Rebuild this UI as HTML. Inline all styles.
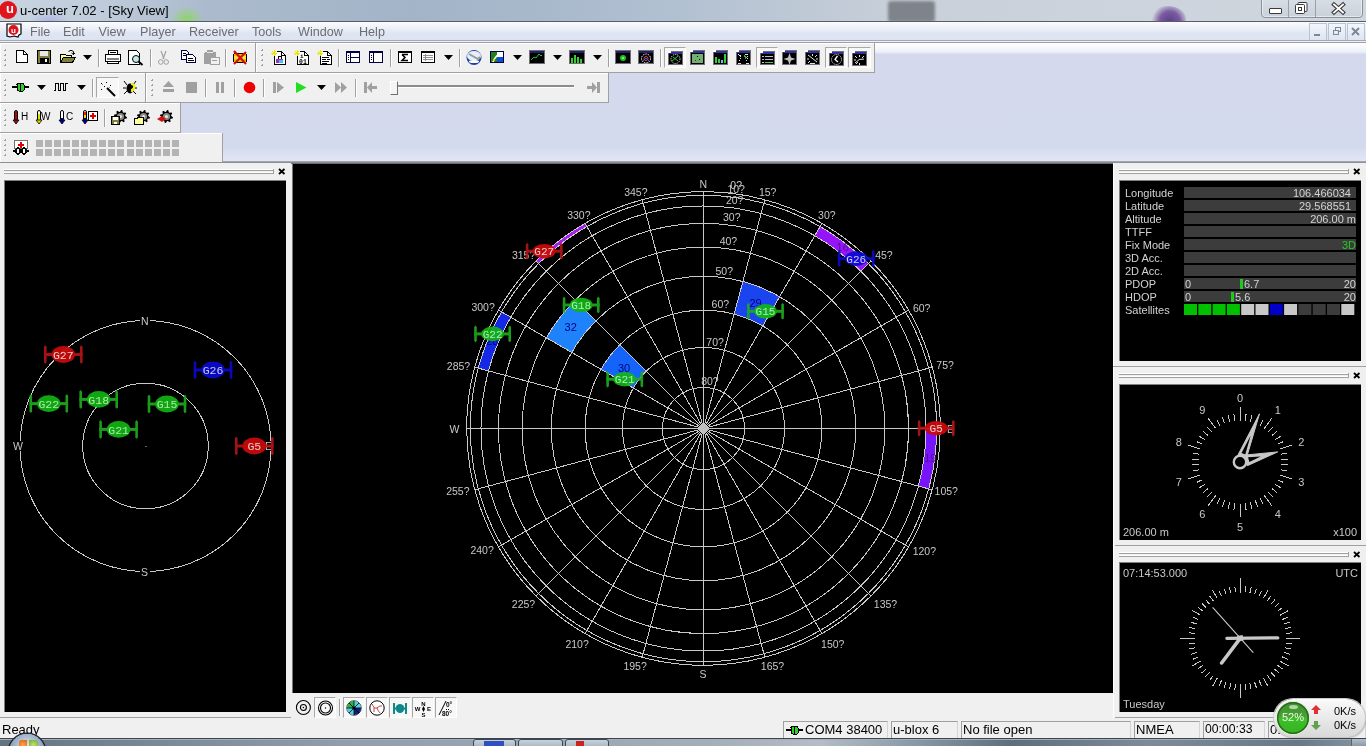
<!DOCTYPE html><html><head><meta charset="utf-8"><style>
html,body{margin:0;padding:0;width:1366px;height:746px;overflow:hidden;position:relative;font-family:"Liberation Sans",sans-serif;background:#d6ddef;}
.a{position:absolute;}
.tb{position:absolute;background:#f0f0f0;border-bottom:1px solid #a0a0a0;border-right:1px solid #a0a0a0;box-shadow:inset 1px 1px 0 #fff;}
.grip{position:absolute;width:2px;height:18px;background-image:radial-gradient(circle,#a8a8a8 0.9px,transparent 1px);background-size:2px 4px;}
.sep{position:absolute;width:1px;height:20px;background:#a0a0a0;box-shadow:1px 0 0 #fff;}
.pressed{position:absolute;border:1px solid #c8c8c8;border-right-color:#fff;border-bottom-color:#fff;background:#f6f6f6;}
svg{position:absolute;overflow:visible;}
.txt{position:absolute;white-space:nowrap;}
</style></head><body><div style="position:absolute;left:0;top:0;width:1366px;height:746px;will-change:transform">
<div class="a" style="left:0;top:0;width:1366px;height:21px;background:linear-gradient(90deg,#c9d4e0 0%,#bfccdb 7%,#abbbcd 15%,#a4b4c8 30%,#a9b9cc 40%,#b2c1d2 50%,#c0cad6 60%,#c9d0d9 67%,#cdd3dc 80%,#d0d6de 100%);overflow:hidden">
<div class="a" style="left:170px;top:6px;width:34px;height:26px;border-radius:50%;background:radial-gradient(#8fd36a,rgba(143,211,106,0) 70%)"></div>
<div class="a" style="left:30px;top:12px;width:40px;height:20px;border-radius:50%;background:radial-gradient(#a9b3e6,rgba(169,179,230,0) 70%)"></div>
<div class="a" style="left:888px;top:1px;width:47px;height:21px;background:#7f848a;border-radius:3px;filter:blur(1.5px)"></div>
<div class="a" style="left:1150px;top:6px;width:36px;height:26px;border-radius:50%;background:radial-gradient(circle at 55% 60%,#5e3f86 0,#7a5aa0 40%,rgba(150,130,180,0) 72%)"></div>
</div>
<div class="a" style="left:-1px;top:1px;width:18px;height:18px;border-radius:50%;background:#e0141c"></div>
<div class="txt" style="left:6px;top:1px;font-size:13px;color:#fff;font-weight:bold">u</div>
<div class="txt" style="left:20px;top:3px;font-size:13px;color:#000">u-center 7.02 - [Sky View]</div>
<div class="a" style="left:1261px;top:-2px;width:100px;height:18px;border:1px solid #8a919a;border-radius:0 0 4px 4px;background:linear-gradient(#d8dee6,#c9d1da);box-shadow:inset 0 0 0 1px rgba(255,255,255,0.5)"></div>
<div class="a" style="left:1288px;top:0;width:1px;height:17px;background:#9aa1a9"></div>
<div class="a" style="left:1315px;top:0;width:1px;height:17px;background:#9aa1a9"></div>
<div class="a" style="left:1269px;top:8px;width:11px;height:4px;border:1px solid #3a3a3a;border-radius:1px;background:#fff"></div>
<svg style="left:1294px;top:1px" width="16" height="14"><rect x="4" y="1.5" width="9" height="9" rx="1" fill="#fff" stroke="#3a3a3a"/><rect x="1.5" y="3.5" width="9" height="9" rx="1" fill="#fff" stroke="#3a3a3a"/><rect x="4.5" y="6.5" width="3" height="3" fill="none" stroke="#3a3a3a"/></svg>
<svg style="left:1331px;top:2px" width="16" height="13"><path d="M3 2.5 L12 10.5 M12 2.5 L3 10.5" stroke="#3a3a3a" stroke-width="4" stroke-linecap="square"/><path d="M3 2.5 L12 10.5 M12 2.5 L3 10.5" stroke="#fff" stroke-width="1.8" stroke-linecap="square"/></svg>
<div class="a" style="left:0;top:21px;width:1366px;height:1px;background:#565d66"></div>
<div class="a" style="left:0;top:22px;width:1366px;height:19px;background:linear-gradient(#fbfcfe 0%,#eef1f8 30%,#dfe5f3 60%,#dde3f2 100%)"></div>
<div class="a" style="left:0;top:40px;width:1366px;height:1px;background:#b9bfcc"></div>
<div class="a" style="left:0;top:41px;width:1366px;height:1px;background:#fff"></div>
<svg style="left:6px;top:23px" width="18" height="16"><path d="M1 1 H15 V11 L13 12 L12 14 L8 13 L4 14 L1 13 Z" fill="#fff" stroke="#000" stroke-width="1.2"/><circle cx="7.5" cy="7" r="5" fill="#d9141c"/><text x="5" y="10" font-size="8" fill="#fff" font-family="Liberation Sans" font-weight="bold">u</text></svg>
<div class="txt" style="left:30px;top:24.5px;font-size:12.6px;color:#6d6d6d">File</div>
<div class="txt" style="left:63px;top:24.5px;font-size:12.6px;color:#6d6d6d">Edit</div>
<div class="txt" style="left:98.5px;top:24.5px;font-size:12.6px;color:#6d6d6d">View</div>
<div class="txt" style="left:140px;top:24.5px;font-size:12.6px;color:#6d6d6d">Player</div>
<div class="txt" style="left:189px;top:24.5px;font-size:12.6px;color:#6d6d6d">Receiver</div>
<div class="txt" style="left:252px;top:24.5px;font-size:12.6px;color:#6d6d6d">Tools</div>
<div class="txt" style="left:298px;top:24.5px;font-size:12.6px;color:#6d6d6d">Window</div>
<div class="txt" style="left:359px;top:24.5px;font-size:12.6px;color:#6d6d6d">Help</div>
<div class="a" style="left:1309px;top:23px;width:16px;height:16px;border:1px solid #b8c4d4;background:linear-gradient(#f4f6fb,#dde4f2)"></div>
<div class="a" style="left:1328px;top:23px;width:16px;height:16px;border:1px solid #b8c4d4;background:linear-gradient(#f4f6fb,#dde4f2)"></div>
<div class="a" style="left:1347px;top:23px;width:16px;height:16px;border:1px solid #b8c4d4;background:linear-gradient(#f4f6fb,#dde4f2)"></div>
<div class="a" style="left:1314px;top:34px;width:6px;height:2px;background:#7c8797"></div>
<svg style="left:1332px;top:26px" width="10" height="10"><rect x="3.5" y="1.5" width="5" height="4" fill="none" stroke="#7c8797"/><rect x="1.5" y="4.5" width="5" height="4" fill="#e6ebf5" stroke="#7c8797"/></svg>
<svg style="left:1351px;top:27px" width="10" height="10"><path d="M1 1 L8 8 M8 1 L1 8" stroke="#7c8797" stroke-width="2"/></svg>
<div class="a" style="left:0;top:43px;width:1366px;height:119px;background:linear-gradient(#ffffff 0px,#f0f2f9 8px,#e6e9f5 10px,#d4d9ed 11px,#d4daee 104px,#e2e6f4 118px)"></div>
<div class="a" style="left:0;top:40px;width:1366px;height:1px;background:#a5a9b2"></div>
<div class="a" style="left:0;top:41px;width:1366px;height:1px;background:#eef0f6"></div>
<div class="a" style="left:0;top:42px;width:1366px;height:1px;background:#9c9fa6"></div>
<div class="a" style="left:0;top:161px;width:1366px;height:1px;background:#a4a6ae"></div>
<div class="a" style="left:0px;top:43px;width:255px;height:29px;background:#f0f0f0;box-shadow:inset 1px 1px 0 #fff"></div>
<div class="a" style="left:0px;top:72px;width:256px;height:1px;background:#a0a0a0"></div>
<div class="a" style="left:255px;top:43px;width:1px;height:29px;background:#a0a0a0"></div>
<div class="a" style="left:256px;top:43px;width:618px;height:29px;background:#f0f0f0;box-shadow:inset 1px 1px 0 #fff"></div>
<div class="a" style="left:256px;top:72px;width:619px;height:1px;background:#a0a0a0"></div>
<div class="a" style="left:874px;top:43px;width:1px;height:29px;background:#a0a0a0"></div>
<div class="a" style="left:4px;top:49px;width:2px;height:2px;background:linear-gradient(135deg,#f8f8f8 0,#f8f8f8 30%,#a0a0a0 31%)"></div>
<div class="a" style="left:4px;top:54px;width:2px;height:2px;background:linear-gradient(135deg,#f8f8f8 0,#f8f8f8 30%,#a0a0a0 31%)"></div>
<div class="a" style="left:4px;top:59px;width:2px;height:2px;background:linear-gradient(135deg,#f8f8f8 0,#f8f8f8 30%,#a0a0a0 31%)"></div>
<div class="a" style="left:4px;top:64px;width:2px;height:2px;background:linear-gradient(135deg,#f8f8f8 0,#f8f8f8 30%,#a0a0a0 31%)"></div>
<svg style="left:16px;top:50px" width="13" height="14" shape-rendering="crispEdges"><path d="M0.5 0.5 H7.5 L11.5 4.5 V12.5 H0.5Z" fill="#fff" stroke="#000"/><path d="M7.5 0.5 V4.5 H11.5" fill="none" stroke="#000"/></svg>
<svg style="left:37px;top:50px" width="14" height="14" shape-rendering="crispEdges"><rect x="0.5" y="0.5" width="13" height="13" fill="#808040" stroke="#000"/><rect x="3" y="1" width="8" height="5" fill="#e8e8e8"/><rect x="3" y="8" width="9" height="5" fill="#000"/><rect x="8" y="9" width="2" height="3" fill="#fff"/></svg>
<svg style="left:60px;top:49px" width="16" height="15" shape-rendering="crispEdges"><path d="M0.5 5.5 H5.5 L6.5 6.5 H11.5 V13.5 H0.5Z" fill="#ffff99" stroke="#000"/><path d="M0.5 13.5 L3.5 8.5 H15.5 L12.5 13.5Z" fill="#808040" stroke="#000"/><path d="M8.5 2.5 Q11 0 13.5 2.5 V5.5 M11.5 4 L13.5 5.5 L15 4" fill="none" stroke="#000" shape-rendering="auto"/></svg>
<svg style="left:83px;top:55px" width="9" height="5" shape-rendering="crispEdges"><path d="M0 0 H9 L4.5 5Z" fill="#000" shape-rendering="auto"/></svg>
<div class="a" style="left:98px;top:49px;width:1px;height:18px;background:#a0a0a0"></div>
<div class="a" style="left:99px;top:49px;width:1px;height:18px;background:#fff"></div>
<svg style="left:105px;top:50px" width="16" height="14" shape-rendering="crispEdges"><path d="M3.5 0.5 H12.5 V4.5 H3.5Z" fill="#fff" stroke="#000"/><path d="M0.5 5.5 Q0.5 4.5 2 4.5 H14 Q15.5 4.5 15.5 6 V11.5 H0.5Z" fill="#fff" stroke="#000"/><rect x="2" y="8" width="12" height="2" fill="#808080"/><path d="M2.5 11.5 H13.5 V13.5 H2.5Z" fill="#fff" stroke="#000"/><rect x="5" y="2" width="6" height="1" fill="#000"/></svg>
<svg style="left:128px;top:50px" width="16" height="16" shape-rendering="crispEdges"><path d="M0.5 0.5 H8.5 L11.5 3.5 V14.5 H0.5Z" fill="#fff" stroke="#000"/><circle cx="8" cy="9" r="3.5" fill="#c8ecec" stroke="#000" shape-rendering="auto"/><path d="M10.5 11.5 L14.5 15" stroke="#000" stroke-width="2" shape-rendering="auto"/></svg>
<div class="a" style="left:150px;top:49px;width:1px;height:18px;background:#a0a0a0"></div>
<div class="a" style="left:151px;top:49px;width:1px;height:18px;background:#fff"></div>
<svg style="left:158px;top:51px" width="11" height="14" shape-rendering="crispEdges"><path d="M3 0 L6 8 M8 0 L5 8" stroke="#a0a0a0" stroke-width="1.2" fill="none" shape-rendering="auto"/><circle cx="2.8" cy="11" r="2.3" fill="none" stroke="#a0a0a0" shape-rendering="auto"/><circle cx="8.2" cy="11" r="2.3" fill="none" stroke="#a0a0a0" shape-rendering="auto"/></svg>
<svg style="left:181px;top:50px" width="15" height="13" shape-rendering="crispEdges"><path d="M0.5 0.5 H5.5 L7.5 2.5 V9.5 H0.5Z" fill="#fff" stroke="#000040"/><rect x="2" y="3" width="3" height="1" fill="#000"/><rect x="2" y="5" width="4" height="1" fill="#000"/><path d="M5.5 4.5 H11.5 L14.5 7.5 V12.5 H5.5Z" fill="#fff" stroke="#000040"/><rect x="7" y="8" width="5" height="1" fill="#000"/><rect x="7" y="10" width="6" height="1" fill="#000"/></svg>
<svg style="left:204px;top:50px" width="15" height="14" shape-rendering="crispEdges"><rect x="0" y="2" width="12" height="12" rx="2" fill="#a0a0a0"/><rect x="3" y="0" width="6" height="3" fill="#a0a0a0"/><rect x="3" y="2" width="6" height="1" fill="#e8e8e8"/><rect x="6" y="7" width="9" height="7" fill="#f0f0f0" stroke="#a0a0a0"/><rect x="8" y="10" width="5" height="1" fill="#a0a0a0"/></svg>
<div class="a" style="left:225px;top:49px;width:1px;height:18px;background:#a0a0a0"></div>
<div class="a" style="left:226px;top:49px;width:1px;height:18px;background:#fff"></div>
<svg style="left:233px;top:51px" width="14" height="14" shape-rendering="crispEdges"><rect x="0.5" y="2.5" width="13" height="9" rx="2" fill="#f0c000" stroke="#000"/><rect x="1" y="5" width="12" height="3" fill="#ffe040"/><path d="M1 0 L13 13 M13 1 L1 13" stroke="#d01010" stroke-width="2.2" shape-rendering="auto"/></svg>
<div class="a" style="left:261px;top:49px;width:2px;height:2px;background:linear-gradient(135deg,#f8f8f8 0,#f8f8f8 30%,#a0a0a0 31%)"></div>
<div class="a" style="left:261px;top:54px;width:2px;height:2px;background:linear-gradient(135deg,#f8f8f8 0,#f8f8f8 30%,#a0a0a0 31%)"></div>
<div class="a" style="left:261px;top:59px;width:2px;height:2px;background:linear-gradient(135deg,#f8f8f8 0,#f8f8f8 30%,#a0a0a0 31%)"></div>
<div class="a" style="left:261px;top:64px;width:2px;height:2px;background:linear-gradient(135deg,#f8f8f8 0,#f8f8f8 30%,#a0a0a0 31%)"></div>
<svg style="left:271px;top:50px" width="16" height="16" shape-rendering="crispEdges"><path d="M5.5 1.5 H10.5 L14.5 5.5 V14.5 H3.5 V5.5" fill="#fff" stroke="#000"/><path d="M10.5 1.5 V5.5 H14.5" fill="none" stroke="#000"/><path d="M3 0 V6 M0 3 H6 M1 1 L5 5 M5 1 L1 5" stroke="#e8e800" stroke-width="1"/><rect x="7" y="6" width="3" height="3" fill="none" stroke="#000"/><rect x="5" y="9" width="7" height="4" fill="#a030c0"/><rect x="8" y="10" width="4" height="3" fill="#40c0f0"/></svg>
<svg style="left:294px;top:50px" width="16" height="16" shape-rendering="crispEdges"><path d="M5.5 1.5 H10.5 L14.5 5.5 V14.5 H3.5 V5.5" fill="#fff" stroke="#000"/><path d="M10.5 1.5 V5.5 H14.5" fill="none" stroke="#000"/><path d="M3 0 V6 M0 3 H6 M1 1 L5 5 M5 1 L1 5" stroke="#e8e800" stroke-width="1"/><text x="6" y="8" font-size="6" font-family="Liberation Mono" font-weight="bold">i</text><text x="5" y="14" font-size="6.5" font-family="Liberation Mono" font-weight="bold">01</text></svg>
<svg style="left:317px;top:50px" width="16" height="16" shape-rendering="crispEdges"><path d="M5.5 1.5 H10.5 L14.5 5.5 V14.5 H3.5 V5.5" fill="#fff" stroke="#000"/><path d="M10.5 1.5 V5.5 H14.5" fill="none" stroke="#000"/><path d="M3 0 V6 M0 3 H6 M1 1 L5 5 M5 1 L1 5" stroke="#e8e800" stroke-width="1"/><rect x="5" y="7" width="7" height="1" fill="#000"/><rect x="5" y="9" width="4" height="1" fill="#000"/><rect x="10" y="9" width="3" height="1" fill="#000"/><rect x="5" y="11" width="7" height="1" fill="#000"/><rect x="5" y="13" width="5" height="1" fill="#000"/></svg>
<div class="a" style="left:338px;top:49px;width:1px;height:18px;background:#a0a0a0"></div>
<div class="a" style="left:339px;top:49px;width:1px;height:18px;background:#fff"></div>
<svg style="left:346px;top:51px" width="14" height="12" shape-rendering="crispEdges"><rect x="0.5" y="0.5" width="13" height="11" fill="#fff" stroke="#000040"/><rect x="0" y="0" width="14" height="2" fill="#000040"/><rect x="4" y="2" width="1" height="10" fill="#000040"/><rect x="5" y="6" width="9" height="1" fill="#000040"/><rect x="2" y="4" width="1" height="1" fill="#000"/><rect x="2" y="6" width="1" height="1" fill="#000"/><rect x="2" y="8" width="1" height="1" fill="#000"/></svg>
<svg style="left:369px;top:51px" width="14" height="12" shape-rendering="crispEdges"><rect x="0.5" y="0.5" width="13" height="11" fill="#fff" stroke="#000040"/><rect x="0" y="0" width="14" height="2" fill="#000040"/><rect x="4" y="2" width="1" height="10" fill="#000040"/><rect x="2" y="4" width="1" height="1" fill="#000"/><rect x="2" y="6" width="1" height="1" fill="#000"/><rect x="2" y="8" width="1" height="1" fill="#000"/></svg>
<div class="a" style="left:390px;top:49px;width:1px;height:18px;background:#a0a0a0"></div>
<div class="a" style="left:391px;top:49px;width:1px;height:18px;background:#fff"></div>
<svg style="left:398px;top:51px" width="14" height="12" shape-rendering="crispEdges"><rect x="0.5" y="0.5" width="13" height="11" fill="#fff" stroke="#000"/><rect x="0" y="0" width="14" height="2" fill="#000"/><path d="M4 3.5 H10 M4 3.5 L7 6.5 L4 9.5 H10" fill="none" stroke="#000" stroke-width="1.5" shape-rendering="auto"/></svg>
<svg style="left:421px;top:51px" width="14" height="12" shape-rendering="crispEdges"><rect x="0.5" y="0.5" width="13" height="11" fill="#fff" stroke="#000"/><rect x="0" y="0" width="14" height="2" fill="#000"/><rect x="2" y="4" width="10" height="1" fill="#909090"/><rect x="2" y="6" width="10" height="1" fill="#909090"/><rect x="2" y="8" width="10" height="1" fill="#909090"/><rect x="4" y="3" width="1" height="7" fill="#909090"/></svg>
<svg style="left:444px;top:55px" width="9" height="5" shape-rendering="crispEdges"><path d="M0 0 H9 L4.5 5Z" fill="#000" shape-rendering="auto"/></svg>
<div class="a" style="left:459px;top:49px;width:1px;height:18px;background:#a0a0a0"></div>
<div class="a" style="left:460px;top:49px;width:1px;height:18px;background:#fff"></div>
<svg style="left:466px;top:50px" width="16" height="16" shape-rendering="crispEdges"><circle cx="8" cy="7.5" r="7.5" fill="#2040a0" shape-rendering="auto"/><ellipse cx="8" cy="6" rx="7" ry="5" fill="#e8eef8" shape-rendering="auto"/><path d="M3 4 L12 9 L14 7" stroke="#909aa8" stroke-width="2" fill="none" shape-rendering="auto"/><ellipse cx="8" cy="11.5" rx="5" ry="1.5" fill="#fff" shape-rendering="auto"/></svg>
<svg style="left:490px;top:51px" width="14" height="12" shape-rendering="crispEdges"><rect x="0" y="0" width="14" height="12" fill="#000040"/><rect x="1" y="1" width="6" height="10" fill="#208020"/><rect x="7" y="1" width="6" height="5" fill="#fff"/><rect x="7" y="6" width="6" height="5" fill="#1050d0"/><path d="M3 11 Q6 3 12 3" stroke="#fff" stroke-width="1.5" fill="none" shape-rendering="auto"/><path d="M2 11 L6 7" stroke="#f0e000" fill="none"/></svg>
<svg style="left:513px;top:55px" width="9" height="5" shape-rendering="crispEdges"><path d="M0 0 H9 L4.5 5Z" fill="#000" shape-rendering="auto"/></svg>
<svg style="left:529px;top:50px" width="16" height="14" shape-rendering="crispEdges"><rect x="0" y="0" width="16" height="14" fill="#000"/><rect x="0.5" y="0.5" width="15" height="13" fill="none" stroke="#707070"/><rect x="1" y="1" width="14" height="2" fill="#202070"/><path d="M2 10 L5 7 L7 8 L10 4 L12 6 L13 5" stroke="#30c030" fill="none" shape-rendering="auto"/></svg>
<svg style="left:553px;top:55px" width="9" height="5" shape-rendering="crispEdges"><path d="M0 0 H9 L4.5 5Z" fill="#000" shape-rendering="auto"/></svg>
<svg style="left:569px;top:50px" width="16" height="14" shape-rendering="crispEdges"><rect x="0" y="0" width="16" height="14" fill="#000"/><rect x="0.5" y="0.5" width="15" height="13" fill="none" stroke="#707070"/><rect x="1" y="1" width="14" height="2" fill="#202070"/><rect x="2" y="8" width="2" height="5" fill="#30d030"/><rect x="5" y="5" width="2" height="8" fill="#30d030"/><rect x="8" y="7" width="2" height="6" fill="#30d030"/><rect x="11" y="9" width="2" height="4" fill="#30d030"/></svg>
<svg style="left:593px;top:55px" width="9" height="5" shape-rendering="crispEdges"><path d="M0 0 H9 L4.5 5Z" fill="#000" shape-rendering="auto"/></svg>
<div class="a" style="left:608px;top:49px;width:1px;height:18px;background:#a0a0a0"></div>
<div class="a" style="left:609px;top:49px;width:1px;height:18px;background:#fff"></div>
<svg style="left:615px;top:50px" width="16" height="14" shape-rendering="crispEdges"><rect x="0" y="0" width="16" height="14" fill="#000"/><rect x="0.5" y="0.5" width="15" height="13" fill="none" stroke="#707070"/><rect x="1" y="1" width="14" height="2" fill="#202070"/><circle cx="8" cy="8" r="3" fill="#20c020" shape-rendering="auto"/><rect x="7" y="7" width="2" height="2" fill="#60ff60"/></svg>
<svg style="left:638px;top:50px" width="16" height="14" shape-rendering="crispEdges"><rect x="0" y="0" width="16" height="14" fill="#000"/><rect x="0.5" y="0.5" width="15" height="13" fill="none" stroke="#707070"/><rect x="1" y="1" width="14" height="2" fill="#202070"/><circle cx="8" cy="8.5" r="4.5" fill="none" stroke="#fff" stroke-dasharray="1.5 1" shape-rendering="auto"/><circle cx="8" cy="8.5" r="2" fill="none" stroke="#f04040" shape-rendering="auto"/><path d="M5 11 L8 8 L11 11" stroke="#4060ff" fill="none" shape-rendering="auto"/></svg>
<div class="a" style="left:660px;top:49px;width:1px;height:18px;background:#a0a0a0"></div>
<div class="a" style="left:661px;top:49px;width:1px;height:18px;background:#fff"></div>
<div class="a" style="left:664px;top:47px;width:22px;height:21px;background:#f7f7f7;border-left:1px solid #a8a8a8;border-top:1px solid #a8a8a8;border-right:1px solid #fff;border-bottom:1px solid #fff;box-sizing:border-box"></div>
<svg style="left:668px;top:51px" width="15" height="14" shape-rendering="crispEdges"><rect x="0" y="0" width="15" height="14" fill="#000"/><rect x="0.5" y="0.5" width="14" height="13" fill="none" stroke="#707070"/><rect x="1" y="1" width="13" height="2" fill="#3030a0"/><rect x="0" y="0" width="3" height="2" fill="#fff"/><circle cx="7.5" cy="8" r="4.5" fill="none" stroke="#fff" stroke-dasharray="1 1" shape-rendering="auto"/><path d="M4 10 L10 5 M5 6 L10 10" stroke="#30c030" shape-rendering="auto"/></svg>
<svg style="left:690px;top:50px" width="15" height="15" shape-rendering="crispEdges"><rect x="0" y="0" width="15" height="15" fill="#000"/><rect x="0.5" y="0.5" width="14" height="14" fill="none" stroke="#707070"/><rect x="1" y="1" width="13" height="2" fill="#3030a0"/><rect x="0" y="0" width="3" height="2" fill="#fff"/><rect x="2" y="4" width="11" height="9" fill="#70b070"/><rect x="7" y="6" width="1" height="1" fill="#000"/><rect x="9" y="9" width="1" height="1" fill="#000"/><rect x="5" y="10" width="1" height="1" fill="#c00000"/></svg>
<svg style="left:713px;top:50px" width="15" height="15" shape-rendering="crispEdges"><rect x="0" y="0" width="15" height="15" fill="#000"/><rect x="0.5" y="0.5" width="14" height="14" fill="none" stroke="#707070"/><rect x="1" y="1" width="13" height="2" fill="#3030a0"/><rect x="0" y="0" width="3" height="2" fill="#fff"/><rect x="2" y="7" width="2" height="6" fill="#30d030"/><rect x="5" y="9" width="2" height="4" fill="#30d030"/><rect x="8" y="10" width="2" height="3" fill="#60c0f0"/><rect x="11" y="4" width="2" height="9" fill="#30d030"/></svg>
<svg style="left:736px;top:50px" width="15" height="15" shape-rendering="crispEdges"><rect x="0" y="0" width="15" height="15" fill="#000"/><rect x="0.5" y="0.5" width="14" height="14" fill="none" stroke="#707070"/><rect x="1" y="1" width="13" height="2" fill="#3030a0"/><rect x="0" y="0" width="3" height="2" fill="#fff"/><path d="M2 4 L5 6 L4 10 L3 12 M8 6 L11 4 L12 9 L10 11" stroke="#e0e0e0" fill="none" stroke-dasharray="1 1"/><path d="M8 5 L11 7 L9 9Z" fill="#30c030"/><rect x="2" y="13" width="3" height="1" fill="#e0e0e0"/><rect x="10" y="13" width="3" height="1" fill="#e0e0e0"/></svg>
<div class="a" style="left:756px;top:47px;width:22px;height:21px;background:#f7f7f7;border-left:1px solid #a8a8a8;border-top:1px solid #a8a8a8;border-right:1px solid #fff;border-bottom:1px solid #fff;box-sizing:border-box"></div>
<svg style="left:760px;top:51px" width="15" height="14" shape-rendering="crispEdges"><rect x="0" y="0" width="15" height="14" fill="#000"/><rect x="0.5" y="0.5" width="14" height="13" fill="none" stroke="#707070"/><rect x="1" y="1" width="13" height="2" fill="#3030a0"/><rect x="0" y="0" width="3" height="2" fill="#fff"/><rect x="2" y="5" width="2" height="1" fill="#c0c0c0"/><rect x="5" y="5" width="8" height="1" fill="#c0c0c0"/><rect x="2" y="8" width="2" height="1" fill="#c0c0c0"/><rect x="5" y="8" width="8" height="1" fill="#c0c0c0"/><rect x="2" y="11" width="2" height="1" fill="#c0c0c0"/><rect x="5" y="11" width="8" height="1" fill="#60c060"/></svg>
<svg style="left:782px;top:50px" width="15" height="15" shape-rendering="crispEdges"><rect x="0" y="0" width="15" height="15" fill="#000"/><rect x="0.5" y="0.5" width="14" height="14" fill="none" stroke="#707070"/><rect x="1" y="1" width="13" height="2" fill="#3030a0"/><rect x="0" y="0" width="3" height="2" fill="#fff"/><path d="M7.5 3 L9 7.5 L13.5 9 L9 10.5 L7.5 15 L6 10.5 L1.5 9 L6 7.5Z" fill="#c0c0c0" shape-rendering="auto"/></svg>
<svg style="left:805px;top:50px" width="15" height="15" shape-rendering="crispEdges"><rect x="0" y="0" width="15" height="15" fill="#000"/><rect x="0.5" y="0.5" width="14" height="14" fill="none" stroke="#707070"/><rect x="1" y="1" width="13" height="2" fill="#3030a0"/><rect x="0" y="0" width="3" height="2" fill="#fff"/><path d="M3 5 L12 12 M7.5 4 V6 M12 5 L10 7 M2 9 H4 M11 9 H13 M3 13 L5 11" stroke="#e0e0e0" shape-rendering="auto"/><rect x="5" y="13" width="5" height="1" fill="#e0e0e0"/></svg>
<div class="a" style="left:825px;top:47px;width:22px;height:21px;background:#f7f7f7;border-left:1px solid #a8a8a8;border-top:1px solid #a8a8a8;border-right:1px solid #fff;border-bottom:1px solid #fff;box-sizing:border-box"></div>
<svg style="left:829px;top:51px" width="15" height="15" shape-rendering="crispEdges"><rect x="0" y="0" width="15" height="15" fill="#000"/><rect x="0.5" y="0.5" width="14" height="14" fill="none" stroke="#707070"/><rect x="1" y="1" width="13" height="2" fill="#3030a0"/><rect x="0" y="0" width="3" height="2" fill="#fff"/><circle cx="7.5" cy="8.5" r="5" fill="none" stroke="#e0e0e0" stroke-dasharray="1.2 1" shape-rendering="auto"/><path d="M8.5 5 L6 8.5 L9 11" stroke="#fff" stroke-width="1.3" fill="none" shape-rendering="auto"/></svg>
<div class="a" style="left:848px;top:47px;width:23px;height:21px;background:#f7f7f7;border-left:1px solid #a8a8a8;border-top:1px solid #a8a8a8;border-right:1px solid #fff;border-bottom:1px solid #fff;box-sizing:border-box"></div>
<svg style="left:852px;top:51px" width="15" height="15" shape-rendering="crispEdges"><rect x="0" y="0" width="15" height="15" fill="#000"/><rect x="0.5" y="0.5" width="14" height="14" fill="none" stroke="#707070"/><rect x="1" y="1" width="13" height="2" fill="#3030a0"/><rect x="0" y="0" width="3" height="2" fill="#fff"/><path d="M3 12 Q7 7 12 8 M7.5 4 V6 M3 5 L5 7 M12 5 L10 7 M2 9 H4 M4 13 L6 11 M7.5 12 V14" stroke="#e0e0e0" fill="none" shape-rendering="auto"/></svg>
<div class="a" style="left:0px;top:73px;width:145px;height:29px;background:#f0f0f0;box-shadow:inset 1px 1px 0 #fff"></div>
<div class="a" style="left:0px;top:102px;width:146px;height:1px;background:#a0a0a0"></div>
<div class="a" style="left:145px;top:73px;width:1px;height:29px;background:#a0a0a0"></div>
<div class="a" style="left:146px;top:73px;width:462px;height:29px;background:#f0f0f0;box-shadow:inset 1px 1px 0 #fff"></div>
<div class="a" style="left:146px;top:102px;width:463px;height:1px;background:#a0a0a0"></div>
<div class="a" style="left:608px;top:73px;width:1px;height:29px;background:#a0a0a0"></div>
<div class="a" style="left:4px;top:79px;width:2px;height:2px;background:linear-gradient(135deg,#f8f8f8 0,#f8f8f8 30%,#a0a0a0 31%)"></div>
<div class="a" style="left:4px;top:84px;width:2px;height:2px;background:linear-gradient(135deg,#f8f8f8 0,#f8f8f8 30%,#a0a0a0 31%)"></div>
<div class="a" style="left:4px;top:89px;width:2px;height:2px;background:linear-gradient(135deg,#f8f8f8 0,#f8f8f8 30%,#a0a0a0 31%)"></div>
<div class="a" style="left:4px;top:94px;width:2px;height:2px;background:linear-gradient(135deg,#f8f8f8 0,#f8f8f8 30%,#a0a0a0 31%)"></div>
<svg style="left:12px;top:83px" width="17" height="8" shape-rendering="crispEdges"><rect x="0" y="3" width="17" height="2" fill="#000"/><rect x="5" y="0" width="7" height="8" rx="1.5" fill="#30d030" stroke="#000" stroke-width="1"/><rect x="8" y="0" width="1" height="8" fill="#000"/></svg>
<svg style="left:37px;top:85px" width="9" height="5" shape-rendering="crispEdges"><path d="M0 0 H9 L4.5 5Z" fill="#000" shape-rendering="auto"/></svg>
<svg style="left:53px;top:83px" width="16" height="9" shape-rendering="crispEdges"><path d="M0.5 7.5 H2.5 V0.5 H5.5 V7.5 H7.5 V0.5 H10.5 V7.5 H12.5 V0.5 H15" fill="none" stroke="#000" stroke-width="1.2"/></svg>
<svg style="left:77px;top:85px" width="9" height="5" shape-rendering="crispEdges"><path d="M0 0 H9 L4.5 5Z" fill="#000" shape-rendering="auto"/></svg>
<div class="a" style="left:92px;top:79px;width:1px;height:18px;background:#a0a0a0"></div>
<div class="a" style="left:93px;top:79px;width:1px;height:18px;background:#fff"></div>
<div class="a" style="left:96px;top:77px;width:23px;height:21px;background:#f7f7f7;border-left:1px solid #a8a8a8;border-top:1px solid #a8a8a8;border-right:1px solid #fff;border-bottom:1px solid #fff;box-sizing:border-box"></div>
<svg style="left:100px;top:81px" width="16" height="16" shape-rendering="crispEdges"><path d="M7 7 L15 15" stroke="#000" stroke-width="2" shape-rendering="auto"/><rect x="1" y="2" width="1" height="1" fill="#000"/><rect x="6" y="1" width="1" height="1" fill="#000"/><rect x="4" y="5" width="1" height="1" fill="#000"/><rect x="10" y="4" width="1" height="1" fill="#000"/><rect x="1" y="8" width="1" height="1" fill="#000"/><rect x="2" y="3" width="1" height="1" fill="#909090"/><rect x="9" y="6" width="1" height="1" fill="#909090"/></svg>
<svg style="left:123px;top:80px" width="15" height="15" shape-rendering="crispEdges"><path d="M1 1 L4 5 M13 1 L10 5 M0 8 H3 M11 8 H14 M1 14 L4 11 M13 14 L10 11" stroke="#000" shape-rendering="auto"/><ellipse cx="7" cy="8.5" rx="3.5" ry="5" fill="#000" shape-rendering="auto"/><path d="M8 4 Q12 4 11 8 L9 10 V12" stroke="#f0f000" stroke-width="2.2" fill="none" shape-rendering="auto"/></svg>
<div class="a" style="left:151px;top:79px;width:2px;height:2px;background:linear-gradient(135deg,#f8f8f8 0,#f8f8f8 30%,#a0a0a0 31%)"></div>
<div class="a" style="left:151px;top:84px;width:2px;height:2px;background:linear-gradient(135deg,#f8f8f8 0,#f8f8f8 30%,#a0a0a0 31%)"></div>
<div class="a" style="left:151px;top:89px;width:2px;height:2px;background:linear-gradient(135deg,#f8f8f8 0,#f8f8f8 30%,#a0a0a0 31%)"></div>
<div class="a" style="left:151px;top:94px;width:2px;height:2px;background:linear-gradient(135deg,#f8f8f8 0,#f8f8f8 30%,#a0a0a0 31%)"></div>
<svg style="left:163px;top:81px" width="11" height="11" shape-rendering="crispEdges"><path d="M5.5 0 L11 6 H0Z" fill="#a0a0a0" shape-rendering="auto"/><rect x="0" y="8" width="11" height="3" fill="#a0a0a0"/></svg>
<svg style="left:186px;top:82px" width="11" height="11" shape-rendering="crispEdges"><rect x="0" y="0" width="11" height="11" fill="#a0a0a0"/></svg>
<div class="a" style="left:205px;top:79px;width:1px;height:18px;background:#a0a0a0"></div>
<div class="a" style="left:206px;top:79px;width:1px;height:18px;background:#fff"></div>
<svg style="left:216px;top:82px" width="8" height="11" shape-rendering="crispEdges"><rect x="0" y="0" width="3" height="11" fill="#a0a0a0"/><rect x="5" y="0" width="3" height="11" fill="#a0a0a0"/></svg>
<div class="a" style="left:234px;top:79px;width:1px;height:18px;background:#a0a0a0"></div>
<div class="a" style="left:235px;top:79px;width:1px;height:18px;background:#fff"></div>
<svg style="left:243px;top:81px" width="13" height="13" shape-rendering="crispEdges"><circle cx="6.5" cy="6.5" r="5.8" fill="#ee0000" shape-rendering="auto"/></svg>
<div class="a" style="left:263px;top:79px;width:1px;height:18px;background:#a0a0a0"></div>
<div class="a" style="left:264px;top:79px;width:1px;height:18px;background:#fff"></div>
<svg style="left:273px;top:82px" width="11" height="11" shape-rendering="crispEdges"><rect x="0" y="0" width="3" height="11" fill="#a0a0a0"/><path d="M4 0 L11 5.5 L4 11Z" fill="#a0a0a0" shape-rendering="auto"/></svg>
<svg style="left:296px;top:82px" width="11" height="11" shape-rendering="crispEdges"><path d="M0 0 L10.5 5.5 L0 11Z" fill="#22dd22" shape-rendering="auto"/></svg>
<svg style="left:317px;top:85px" width="9" height="5" shape-rendering="crispEdges"><path d="M0 0 H9 L4.5 5Z" fill="#000" shape-rendering="auto"/></svg>
<svg style="left:335px;top:82px" width="12" height="11" shape-rendering="crispEdges"><path d="M0 0 L6 5.5 L0 11Z M6 0 L12 5.5 L6 11Z" fill="#a0a0a0" shape-rendering="auto"/></svg>
<div class="a" style="left:355px;top:79px;width:1px;height:18px;background:#a0a0a0"></div>
<div class="a" style="left:356px;top:79px;width:1px;height:18px;background:#fff"></div>
<svg style="left:364px;top:82px" width="13" height="11" shape-rendering="crispEdges"><rect x="0" y="0" width="3" height="11" fill="#a0a0a0"/><path d="M3 5.5 L8 0 V4 H13 V7 H8 V11Z" fill="#a0a0a0" shape-rendering="auto"/></svg>
<div class="a" style="left:396px;top:85px;width:178px;height:2px;background:#8c8c8c;border-bottom:1px solid #fff"></div>
<div class="a" style="left:390px;top:81px;width:6px;height:12px;background:#f4f4f4;border-left:1px solid #fff;border-top:1px solid #fff;border-right:1px solid #707070;border-bottom:1px solid #707070"></div>
<svg style="left:587px;top:82px" width="13" height="11" shape-rendering="crispEdges"><rect x="10" y="0" width="3" height="11" fill="#a0a0a0"/><path d="M10 5.5 L5 0 V4 H0 V7 H5 V11Z" fill="#a0a0a0" shape-rendering="auto"/></svg>
<div class="a" style="left:0px;top:103px;width:180px;height:29px;background:#f0f0f0;box-shadow:inset 1px 1px 0 #fff"></div>
<div class="a" style="left:0px;top:132px;width:181px;height:1px;background:#a0a0a0"></div>
<div class="a" style="left:180px;top:103px;width:1px;height:29px;background:#a0a0a0"></div>
<div class="a" style="left:4px;top:109px;width:2px;height:2px;background:linear-gradient(135deg,#f8f8f8 0,#f8f8f8 30%,#a0a0a0 31%)"></div>
<div class="a" style="left:4px;top:114px;width:2px;height:2px;background:linear-gradient(135deg,#f8f8f8 0,#f8f8f8 30%,#a0a0a0 31%)"></div>
<div class="a" style="left:4px;top:119px;width:2px;height:2px;background:linear-gradient(135deg,#f8f8f8 0,#f8f8f8 30%,#a0a0a0 31%)"></div>
<div class="a" style="left:4px;top:124px;width:2px;height:2px;background:linear-gradient(135deg,#f8f8f8 0,#f8f8f8 30%,#a0a0a0 31%)"></div>
<svg style="left:13px;top:110px" width="6" height="15" shape-rendering="crispEdges"><rect x="1.5" y="0.5" width="3" height="10" rx="1.5" fill="#fff" stroke="#000" shape-rendering="auto"/><rect x="2" y="1" width="2" height="10" fill="#a01010"/><path d="M0 10 H6 L3 14Z" fill="#a01010" stroke="#000" stroke-width="0.8" shape-rendering="auto"/></svg>
<div class="txt" style="left:21px;top:111px;font-size:10px;color:#000">H</div>
<svg style="left:36px;top:110px" width="6" height="15" shape-rendering="crispEdges"><rect x="1.5" y="0.5" width="3" height="10" rx="1.5" fill="#fff" stroke="#000" shape-rendering="auto"/><rect x="2" y="4" width="2" height="7" fill="#e0e000"/><path d="M0 10 H6 L3 14Z" fill="#e0e000" stroke="#000" stroke-width="0.8" shape-rendering="auto"/></svg>
<div class="txt" style="left:41px;top:111px;font-size:10px;color:#000">W</div>
<svg style="left:59px;top:110px" width="6" height="15" shape-rendering="crispEdges"><rect x="1.5" y="0.5" width="3" height="10" rx="1.5" fill="#fff" stroke="#000" shape-rendering="auto"/><rect x="2" y="8" width="2" height="3" fill="#0000a0"/><path d="M0 10 H6 L3 14Z" fill="#0000a0" stroke="#000" stroke-width="0.8" shape-rendering="auto"/></svg>
<div class="txt" style="left:66px;top:111px;font-size:10px;color:#000">C</div>
<svg style="left:82px;top:110px" width="6" height="15" shape-rendering="crispEdges"><rect x="1.5" y="0.5" width="3" height="10" rx="1.5" fill="#fff" stroke="#000" shape-rendering="auto"/><rect x="2" y="2" width="2" height="3" fill="#e02020"/><rect x="2" y="5" width="2" height="3" fill="#e0e000"/><rect x="2" y="8" width="2" height="3" fill="#0000a0"/><path d="M0 10 H6 L3 14Z" fill="#0000a0" stroke="#000" stroke-width="0.8" shape-rendering="auto"/></svg>
<svg style="left:88px;top:111px" width="10" height="10" shape-rendering="crispEdges"><rect x="0.5" y="0.5" width="9" height="9" fill="#fff" stroke="#000"/><rect x="4" y="2" width="2" height="6" fill="#e00000"/><rect x="2" y="4" width="6" height="2" fill="#e00000"/></svg>
<div class="a" style="left:104px;top:109px;width:1px;height:18px;background:#a0a0a0"></div>
<div class="a" style="left:105px;top:109px;width:1px;height:18px;background:#fff"></div>
<svg style="left:111px;top:110px" width="16" height="15" shape-rendering="crispEdges"><path d="M10.14 0.03 L11.39 0.28 L11.76 2.27 L12.55 2.79 L14.52 2.38 L15.23 3.44 L14.09 5.11 L14.28 6.03 L15.97 7.14 L15.72 8.39 L13.73 8.76 L13.21 9.55 L13.62 11.52 L12.56 12.23 L10.89 11.09 L9.97 11.28 L8.86 12.97 L7.61 12.72 L7.24 10.73 L6.45 10.21 L4.48 10.62 L3.77 9.56 L4.91 7.89 L4.72 6.97 L3.03 5.86 L3.28 4.61 L5.27 4.24 L5.79 3.45 L5.38 1.48 L6.44 0.77 L8.11 1.91 L9.03 1.72Z" fill="#000" shape-rendering="auto"/><circle cx="9.5" cy="6.5" r="3.6" fill="#8a8a8a" shape-rendering="auto"/><circle cx="9.5" cy="6.5" r="1.5" fill="#e8e8e8" shape-rendering="auto"/><rect x="0.5" y="6.5" width="8" height="8" fill="#808040" stroke="#000"/><rect x="2" y="7" width="5" height="3" fill="#fff"/><rect x="3" y="12" width="3" height="2" fill="#fff"/></svg>
<svg style="left:134px;top:110px" width="16" height="15" shape-rendering="crispEdges"><path d="M10.14 0.03 L11.39 0.28 L11.76 2.27 L12.55 2.79 L14.52 2.38 L15.23 3.44 L14.09 5.11 L14.28 6.03 L15.97 7.14 L15.72 8.39 L13.73 8.76 L13.21 9.55 L13.62 11.52 L12.56 12.23 L10.89 11.09 L9.97 11.28 L8.86 12.97 L7.61 12.72 L7.24 10.73 L6.45 10.21 L4.48 10.62 L3.77 9.56 L4.91 7.89 L4.72 6.97 L3.03 5.86 L3.28 4.61 L5.27 4.24 L5.79 3.45 L5.38 1.48 L6.44 0.77 L8.11 1.91 L9.03 1.72Z" fill="#000" shape-rendering="auto"/><circle cx="9.5" cy="6.5" r="3.6" fill="#8a8a8a" shape-rendering="auto"/><circle cx="9.5" cy="6.5" r="1.5" fill="#e8e8e8" shape-rendering="auto"/><path d="M0.5 8.5 H3 L4 7.5 H9.5 V14.5 H0.5Z" fill="#ffff99" stroke="#000"/></svg>
<svg style="left:157px;top:110px" width="16" height="15" shape-rendering="crispEdges"><path d="M10.14 0.03 L11.39 0.28 L11.76 2.27 L12.55 2.79 L14.52 2.38 L15.23 3.44 L14.09 5.11 L14.28 6.03 L15.97 7.14 L15.72 8.39 L13.73 8.76 L13.21 9.55 L13.62 11.52 L12.56 12.23 L10.89 11.09 L9.97 11.28 L8.86 12.97 L7.61 12.72 L7.24 10.73 L6.45 10.21 L4.48 10.62 L3.77 9.56 L4.91 7.89 L4.72 6.97 L3.03 5.86 L3.28 4.61 L5.27 4.24 L5.79 3.45 L5.38 1.48 L6.44 0.77 L8.11 1.91 L9.03 1.72Z" fill="#000" shape-rendering="auto"/><circle cx="9.5" cy="6.5" r="3.6" fill="#8a8a8a" shape-rendering="auto"/><circle cx="9.5" cy="6.5" r="1.5" fill="#e8e8e8" shape-rendering="auto"/><path d="M0 9 L5 6 L9 9 L5 12Z" fill="#d01010" shape-rendering="auto"/></svg>
<div class="a" style="left:0px;top:133px;width:222px;height:29px;background:#f0f0f0;box-shadow:inset 1px 1px 0 #fff"></div>
<div class="a" style="left:0px;top:162px;width:223px;height:1px;background:#a0a0a0"></div>
<div class="a" style="left:222px;top:133px;width:1px;height:29px;background:#a0a0a0"></div>
<div class="a" style="left:4px;top:139px;width:2px;height:2px;background:linear-gradient(135deg,#f8f8f8 0,#f8f8f8 30%,#a0a0a0 31%)"></div>
<div class="a" style="left:4px;top:144px;width:2px;height:2px;background:linear-gradient(135deg,#f8f8f8 0,#f8f8f8 30%,#a0a0a0 31%)"></div>
<div class="a" style="left:4px;top:149px;width:2px;height:2px;background:linear-gradient(135deg,#f8f8f8 0,#f8f8f8 30%,#a0a0a0 31%)"></div>
<div class="a" style="left:4px;top:154px;width:2px;height:2px;background:linear-gradient(135deg,#f8f8f8 0,#f8f8f8 30%,#a0a0a0 31%)"></div>
<svg style="left:13px;top:140px" width="16" height="15" shape-rendering="crispEdges"><rect x="1.5" y="0.5" width="13" height="8" fill="#fff" stroke="#707070"/><rect x="7" y="2" width="2" height="6" fill="#e00000"/><rect x="5" y="4" width="6" height="2" fill="#e00000"/><rect x="0" y="10" width="16" height="2" fill="#000"/><rect x="3" y="8" width="4" height="6" rx="1.5" fill="#fff" stroke="#000" stroke-width="1.2"/><rect x="9" y="8" width="4" height="6" rx="1.5" fill="#fff" stroke="#000" stroke-width="1.2"/></svg>
<div class="a" style="left:36.00px;top:140px;width:7px;height:7px;background:#b4b4b4"></div>
<div class="a" style="left:45.05px;top:140px;width:7px;height:7px;background:#b4b4b4"></div>
<div class="a" style="left:54.10px;top:140px;width:7px;height:7px;background:#b4b4b4"></div>
<div class="a" style="left:63.15px;top:140px;width:7px;height:7px;background:#b4b4b4"></div>
<div class="a" style="left:72.20px;top:140px;width:7px;height:7px;background:#b4b4b4"></div>
<div class="a" style="left:81.25px;top:140px;width:7px;height:7px;background:#b4b4b4"></div>
<div class="a" style="left:90.30px;top:140px;width:7px;height:7px;background:#b4b4b4"></div>
<div class="a" style="left:99.35px;top:140px;width:7px;height:7px;background:#b4b4b4"></div>
<div class="a" style="left:108.40px;top:140px;width:7px;height:7px;background:#b4b4b4"></div>
<div class="a" style="left:117.45px;top:140px;width:7px;height:7px;background:#b4b4b4"></div>
<div class="a" style="left:126.50px;top:140px;width:7px;height:7px;background:#b4b4b4"></div>
<div class="a" style="left:135.55px;top:140px;width:7px;height:7px;background:#b4b4b4"></div>
<div class="a" style="left:144.60px;top:140px;width:7px;height:7px;background:#b4b4b4"></div>
<div class="a" style="left:153.65px;top:140px;width:7px;height:7px;background:#b4b4b4"></div>
<div class="a" style="left:162.70px;top:140px;width:7px;height:7px;background:#b4b4b4"></div>
<div class="a" style="left:171.75px;top:140px;width:7px;height:7px;background:#b4b4b4"></div>
<div class="a" style="left:36.00px;top:149px;width:7px;height:7px;background:#b4b4b4"></div>
<div class="a" style="left:45.05px;top:149px;width:7px;height:7px;background:#b4b4b4"></div>
<div class="a" style="left:54.10px;top:149px;width:7px;height:7px;background:#b4b4b4"></div>
<div class="a" style="left:63.15px;top:149px;width:7px;height:7px;background:#b4b4b4"></div>
<div class="a" style="left:72.20px;top:149px;width:7px;height:7px;background:#b4b4b4"></div>
<div class="a" style="left:81.25px;top:149px;width:7px;height:7px;background:#b4b4b4"></div>
<div class="a" style="left:90.30px;top:149px;width:7px;height:7px;background:#b4b4b4"></div>
<div class="a" style="left:99.35px;top:149px;width:7px;height:7px;background:#b4b4b4"></div>
<div class="a" style="left:108.40px;top:149px;width:7px;height:7px;background:#b4b4b4"></div>
<div class="a" style="left:117.45px;top:149px;width:7px;height:7px;background:#b4b4b4"></div>
<div class="a" style="left:126.50px;top:149px;width:7px;height:7px;background:#b4b4b4"></div>
<div class="a" style="left:135.55px;top:149px;width:7px;height:7px;background:#b4b4b4"></div>
<div class="a" style="left:144.60px;top:149px;width:7px;height:7px;background:#b4b4b4"></div>
<div class="a" style="left:153.65px;top:149px;width:7px;height:7px;background:#b4b4b4"></div>
<div class="a" style="left:162.70px;top:149px;width:7px;height:7px;background:#b4b4b4"></div>
<div class="a" style="left:171.75px;top:149px;width:7px;height:7px;background:#b4b4b4"></div>
<div class="a" style="left:0;top:162px;width:1366px;height:1px;background:#8c8f96"></div>
<div class="a" style="left:0;top:163px;width:292px;height:555px;background:#f0f0f0"></div>
<div class="a" style="left:1113px;top:163px;width:253px;height:555px;background:#f0f0f0;box-shadow:inset 1px 0 0 #fff"></div>
<div class="a" style="left:291px;top:162px;width:822px;height:2px;background:linear-gradient(#9a9ca4,#5a5c60)"></div>
<div class="a" style="left:292px;top:164px;width:821px;height:529px;background:#000;box-shadow:inset 1px 0 0 #777"></div>
<div class="a" style="left:292px;top:693px;width:821px;height:25px;background:#f0f0f0"></div>
<div class="a" style="left:4px;top:169px;width:269px;height:1px;background:#fff"></div>
<div class="a" style="left:4px;top:170px;width:269px;height:1px;background:#a0a0a0"></div>
<div class="a" style="left:4px;top:172px;width:269px;height:1px;background:#fff"></div>
<div class="a" style="left:4px;top:173px;width:269px;height:1px;background:#a0a0a0"></div>
<div class="a" style="left:273px;top:169px;width:1px;height:5px;background:#a0a0a0"></div>
<svg style="left:278px;top:168px" width="8" height="8"><path d="M1 1 L6.5 6 M6.5 1 L1 6" stroke="#000" stroke-width="1.8"/></svg>
<div class="a" style="left:4px;top:180px;width:281px;height:531px;background:#000;border-left:1px solid #808080;border-top:1px solid #808080"></div>
<div class="a" style="left:0;top:717px;width:291px;height:1px;background:#a0a0a0"></div>
<div class="a" style="left:1119px;top:169px;width:229px;height:1px;background:#fff"></div>
<div class="a" style="left:1119px;top:170px;width:229px;height:1px;background:#a0a0a0"></div>
<div class="a" style="left:1119px;top:172px;width:229px;height:1px;background:#fff"></div>
<div class="a" style="left:1119px;top:173px;width:229px;height:1px;background:#a0a0a0"></div>
<div class="a" style="left:1348px;top:169px;width:1px;height:5px;background:#a0a0a0"></div>
<svg style="left:1353px;top:168px" width="8" height="8"><path d="M1 1 L6.5 6 M6.5 1 L1 6" stroke="#000" stroke-width="1.8"/></svg>
<div class="a" style="left:1119px;top:180px;width:241px;height:180px;background:#000;border-left:1px solid #808080;border-top:1px solid #808080"></div>
<div class="a" style="left:1113px;top:366px;width:253px;height:1px;background:#a0a0a0"></div>
<div class="a" style="left:1119px;top:373px;width:229px;height:1px;background:#fff"></div>
<div class="a" style="left:1119px;top:374px;width:229px;height:1px;background:#a0a0a0"></div>
<div class="a" style="left:1119px;top:376px;width:229px;height:1px;background:#fff"></div>
<div class="a" style="left:1119px;top:377px;width:229px;height:1px;background:#a0a0a0"></div>
<div class="a" style="left:1348px;top:373px;width:1px;height:5px;background:#a0a0a0"></div>
<svg style="left:1353px;top:372px" width="8" height="8"><path d="M1 1 L6.5 6 M6.5 1 L1 6" stroke="#000" stroke-width="1.8"/></svg>
<div class="a" style="left:1119px;top:384px;width:241px;height:155px;background:#000;border-left:1px solid #808080;border-top:1px solid #808080"></div>
<div class="a" style="left:1115px;top:545px;width:251px;height:1px;background:#a0a0a0"></div>
<div class="a" style="left:1119px;top:552px;width:229px;height:1px;background:#fff"></div>
<div class="a" style="left:1119px;top:553px;width:229px;height:1px;background:#a0a0a0"></div>
<div class="a" style="left:1119px;top:555px;width:229px;height:1px;background:#fff"></div>
<div class="a" style="left:1119px;top:556px;width:229px;height:1px;background:#a0a0a0"></div>
<div class="a" style="left:1348px;top:552px;width:1px;height:5px;background:#a0a0a0"></div>
<svg style="left:1353px;top:551px" width="8" height="8"><path d="M1 1 L6.5 6 M6.5 1 L1 6" stroke="#000" stroke-width="1.8"/></svg>
<div class="a" style="left:1119px;top:562px;width:241px;height:149px;background:#000;border-left:1px solid #808080;border-top:1px solid #808080"></div>
<div class="a" style="left:1115px;top:717px;width:251px;height:1px;background:#a0a0a0"></div>
<div class="a" style="left:0;top:718px;width:1366px;height:20px;background:#f0f0f0"></div>
<div class="txt" style="left:2px;top:722px;font-size:13px;color:#000">Ready</div>
<div class="a" style="left:783px;top:721px;width:103px;height:17px;border-left:1px solid #a0a0a0;border-top:1px solid #a0a0a0;border-right:1px solid #d4d4d4"></div>
<div class="txt" style="left:805px;top:722px;font-size:13px;color:#000">COM4 38400</div>
<div class="a" style="left:891px;top:721px;width:65px;height:17px;border-left:1px solid #a0a0a0;border-top:1px solid #a0a0a0;border-right:1px solid #d4d4d4"></div>
<div class="txt" style="left:893px;top:722px;font-size:13px;color:#000">u-blox 6</div>
<div class="a" style="left:961px;top:721px;width:168px;height:17px;border-left:1px solid #a0a0a0;border-top:1px solid #a0a0a0;border-right:1px solid #d4d4d4"></div>
<div class="txt" style="left:963px;top:722px;font-size:13px;color:#000">No file open</div>
<div class="a" style="left:1134px;top:721px;width:64px;height:17px;border-left:1px solid #a0a0a0;border-top:1px solid #a0a0a0;border-right:1px solid #d4d4d4"></div>
<div class="txt" style="left:1136px;top:722px;font-size:13px;color:#000">NMEA</div>
<div class="a" style="left:1203px;top:721px;width:60px;height:17px;border-left:1px solid #a0a0a0;border-top:1px solid #a0a0a0;border-right:1px solid #d4d4d4"></div>
<div class="txt" style="left:1205px;top:722px;font-size:12.2px;color:#000">00:00:33</div>
<div class="a" style="left:1268px;top:721px;width:96px;height:17px;border-left:1px solid #a0a0a0;border-top:1px solid #a0a0a0;border-right:1px solid #d4d4d4"></div>
<div class="txt" style="left:1270px;top:722px;font-size:13px;color:#000">0:00</div>
<div class="a" style="left:0;top:738px;width:1366px;height:8px;background:linear-gradient(90deg,#5d6e80,#7c8ea3 40%,#8a9aad 60%,#6f8093)"></div>
<div class="a" style="left:0;top:738px;width:1366px;height:1px;background:#3c4450"></div>
<svg style="left:0;top:0" width="1366" height="746" viewBox="0 0 1366 746"><defs><clipPath id="mc"><rect x="293" y="163" width="820" height="530"/></clipPath></defs><g clip-path="url(#mc)"><path d="M536.06 261.06 L541.63 255.67 L547.37 250.46 L553.28 245.45 L559.35 240.63 L565.57 236.02 L571.94 231.61 L578.45 227.41 L585.10 223.43 L586.90 226.54 L580.35 230.46 L573.94 234.60 L567.66 238.94 L561.54 243.49 L555.56 248.23 L549.74 253.17 L544.08 258.29 L538.60 263.60Z" fill="#a81cf0"/><path d="M820.10 226.54 L826.65 230.46 L833.06 234.60 L839.34 238.94 L845.46 243.49 L851.44 248.23 L857.26 253.17 L862.92 258.29 L868.40 263.60 L860.84 271.16 L855.61 266.09 L850.22 261.20 L844.66 256.49 L838.96 251.96 L833.11 247.63 L827.13 243.48 L821.01 239.54 L814.76 235.79Z" fill="#9614fa"/><path d="M936.70 428.50 L936.58 436.13 L936.20 443.75 L935.58 451.36 L934.71 458.94 L933.59 466.49 L932.22 474.00 L930.61 481.45 L928.76 488.86 L918.44 486.09 L920.21 479.03 L921.74 471.91 L923.05 464.75 L924.12 457.54 L924.95 450.31 L925.54 443.05 L925.90 435.78 L926.02 428.50Z" fill="#7814fa"/><path d="M478.24 368.14 L480.34 360.80 L482.67 353.54 L485.24 346.35 L488.05 339.26 L491.08 332.26 L494.35 325.36 L497.83 318.57 L501.54 311.90 L510.79 317.24 L507.26 323.61 L503.93 330.08 L500.82 336.66 L497.92 343.35 L495.24 350.12 L492.79 356.97 L490.56 363.91 L488.56 370.91Z" fill="#1428e6"/><path d="M546.40 337.80 L549.46 332.71 L552.67 327.72 L556.05 322.84 L559.59 318.07 L563.28 313.42 L567.12 308.90 L571.10 304.50 L575.23 300.23 L595.87 320.87 L592.41 324.45 L589.06 328.14 L585.84 331.94 L582.74 335.84 L579.77 339.84 L576.94 343.94 L574.24 348.12 L571.68 352.39Z" fill="#1e82fa"/><path d="M600.96 369.30 L602.95 365.98 L605.05 362.72 L607.26 359.53 L609.57 356.42 L611.98 353.39 L614.48 350.43 L617.08 347.56 L619.78 344.78 L646.23 371.23 L644.39 373.14 L642.61 375.10 L640.89 377.12 L639.25 379.20 L637.67 381.32 L636.16 383.50 L634.72 385.73 L633.36 388.00Z" fill="#1464fa"/><path d="M742.90 281.47 L747.68 282.84 L752.43 284.37 L757.12 286.04 L761.75 287.87 L766.32 289.86 L770.82 291.99 L775.25 294.26 L779.61 296.68 L762.70 325.96 L759.31 324.08 L755.87 322.31 L752.36 320.65 L748.81 319.11 L745.21 317.69 L741.56 316.38 L737.87 315.20 L734.14 314.13Z" fill="#1a44ee"/><circle cx="703.5" cy="428.5" r="236.80" fill="none" stroke="#c8c8c8" stroke-width="1" shape-rendering="crispEdges"/><circle cx="703.5" cy="428.5" r="233.20" fill="none" stroke="#c8c8c8" stroke-width="1" shape-rendering="crispEdges"/><circle cx="703.5" cy="428.5" r="222.52" fill="none" stroke="#c8c8c8" stroke-width="1" shape-rendering="crispEdges"/><circle cx="703.5" cy="428.5" r="205.07" fill="none" stroke="#c8c8c8" stroke-width="1" shape-rendering="crispEdges"/><circle cx="703.5" cy="428.5" r="181.40" fill="none" stroke="#c8c8c8" stroke-width="1" shape-rendering="crispEdges"/><circle cx="703.5" cy="428.5" r="152.21" fill="none" stroke="#c8c8c8" stroke-width="1" shape-rendering="crispEdges"/><circle cx="703.5" cy="428.5" r="118.40" fill="none" stroke="#c8c8c8" stroke-width="1" shape-rendering="crispEdges"/><circle cx="703.5" cy="428.5" r="80.99" fill="none" stroke="#c8c8c8" stroke-width="1" shape-rendering="crispEdges"/><circle cx="703.5" cy="428.5" r="41.12" fill="none" stroke="#c8c8c8" stroke-width="1" shape-rendering="crispEdges"/><line x1="703.5" y1="428.5" x2="703.50" y2="191.70" stroke="#c8c8c8" stroke-width="1" shape-rendering="crispEdges"/><line x1="703.5" y1="428.5" x2="764.79" y2="199.77" stroke="#c8c8c8" stroke-width="1" shape-rendering="crispEdges"/><line x1="703.5" y1="428.5" x2="821.90" y2="223.43" stroke="#c8c8c8" stroke-width="1" shape-rendering="crispEdges"/><line x1="703.5" y1="428.5" x2="870.94" y2="261.06" stroke="#c8c8c8" stroke-width="1" shape-rendering="crispEdges"/><line x1="703.5" y1="428.5" x2="908.57" y2="310.10" stroke="#c8c8c8" stroke-width="1" shape-rendering="crispEdges"/><line x1="703.5" y1="428.5" x2="932.23" y2="367.21" stroke="#c8c8c8" stroke-width="1" shape-rendering="crispEdges"/><line x1="703.5" y1="428.5" x2="940.30" y2="428.50" stroke="#c8c8c8" stroke-width="1" shape-rendering="crispEdges"/><line x1="703.5" y1="428.5" x2="932.23" y2="489.79" stroke="#c8c8c8" stroke-width="1" shape-rendering="crispEdges"/><line x1="703.5" y1="428.5" x2="908.57" y2="546.90" stroke="#c8c8c8" stroke-width="1" shape-rendering="crispEdges"/><line x1="703.5" y1="428.5" x2="870.94" y2="595.94" stroke="#c8c8c8" stroke-width="1" shape-rendering="crispEdges"/><line x1="703.5" y1="428.5" x2="821.90" y2="633.57" stroke="#c8c8c8" stroke-width="1" shape-rendering="crispEdges"/><line x1="703.5" y1="428.5" x2="764.79" y2="657.23" stroke="#c8c8c8" stroke-width="1" shape-rendering="crispEdges"/><line x1="703.5" y1="428.5" x2="703.50" y2="665.30" stroke="#c8c8c8" stroke-width="1" shape-rendering="crispEdges"/><line x1="703.5" y1="428.5" x2="642.21" y2="657.23" stroke="#c8c8c8" stroke-width="1" shape-rendering="crispEdges"/><line x1="703.5" y1="428.5" x2="585.10" y2="633.57" stroke="#c8c8c8" stroke-width="1" shape-rendering="crispEdges"/><line x1="703.5" y1="428.5" x2="536.06" y2="595.94" stroke="#c8c8c8" stroke-width="1" shape-rendering="crispEdges"/><line x1="703.5" y1="428.5" x2="498.43" y2="546.90" stroke="#c8c8c8" stroke-width="1" shape-rendering="crispEdges"/><line x1="703.5" y1="428.5" x2="474.77" y2="489.79" stroke="#c8c8c8" stroke-width="1" shape-rendering="crispEdges"/><line x1="703.5" y1="428.5" x2="466.70" y2="428.50" stroke="#c8c8c8" stroke-width="1" shape-rendering="crispEdges"/><line x1="703.5" y1="428.5" x2="474.77" y2="367.21" stroke="#c8c8c8" stroke-width="1" shape-rendering="crispEdges"/><line x1="703.5" y1="428.5" x2="498.43" y2="310.10" stroke="#c8c8c8" stroke-width="1" shape-rendering="crispEdges"/><line x1="703.5" y1="428.5" x2="536.06" y2="261.06" stroke="#c8c8c8" stroke-width="1" shape-rendering="crispEdges"/><line x1="703.5" y1="428.5" x2="585.10" y2="223.43" stroke="#c8c8c8" stroke-width="1" shape-rendering="crispEdges"/><line x1="703.5" y1="428.5" x2="642.21" y2="199.77" stroke="#c8c8c8" stroke-width="1" shape-rendering="crispEdges"/><path d="M698.0 428.5 L703.5 423.0 L709.0 428.5 L703.5 434.0Z" fill="#c0c0c0"/><text x="842.7" y="251.0" font-size="11" fill="#50108a" text-anchor="middle" font-family="Liberation Sans">16</text><text x="930.3" y="462.4" font-size="11" fill="#50108a" text-anchor="middle" font-family="Liberation Sans">19</text><text x="492.2" y="345.0" font-size="11" fill="#000080" text-anchor="middle" font-family="Liberation Sans">28</text><text x="570.7" y="330.6" font-size="11" fill="#000080" text-anchor="middle" font-family="Liberation Sans">32</text><text x="624.1" y="371.6" font-size="11" fill="#000080" text-anchor="middle" font-family="Liberation Sans">30</text><text x="755.5" y="307.0" font-size="11" fill="#000080" text-anchor="middle" font-family="Liberation Sans">29</text><text x="699.6" y="187.9" font-size="10.5" fill="#c8c8c8" font-family="Liberation Sans">N</text><text x="758.9" y="195.5" font-size="10.5" fill="#c8c8c8" font-family="Liberation Sans">15?</text><text x="818.1" y="218.8" font-size="10.5" fill="#c8c8c8" font-family="Liberation Sans">30?</text><text x="875.2" y="258.6" font-size="10.5" fill="#c8c8c8" font-family="Liberation Sans">45?</text><text x="912.9" y="311.5" font-size="10.5" fill="#c8c8c8" font-family="Liberation Sans">60?</text><text x="936.3" y="369.4" font-size="10.5" fill="#c8c8c8" font-family="Liberation Sans">75?</text><text x="947" y="432.5" font-size="10.5" fill="#c8c8c8" font-family="Liberation Sans">E</text><text x="934.6" y="494.8" font-size="10.5" fill="#c8c8c8" font-family="Liberation Sans">105?</text><text x="912.7" y="554.5" font-size="10.5" fill="#c8c8c8" font-family="Liberation Sans">120?</text><text x="873.8" y="608" font-size="10.5" fill="#c8c8c8" font-family="Liberation Sans">135?</text><text x="821.1" y="648" font-size="10.5" fill="#c8c8c8" font-family="Liberation Sans">150?</text><text x="760.8" y="670" font-size="10.5" fill="#c8c8c8" font-family="Liberation Sans">165?</text><text x="699.6" y="677.6" font-size="10.5" fill="#c8c8c8" font-family="Liberation Sans">S</text><text x="623.4" y="670" font-size="10.5" fill="#c8c8c8" font-family="Liberation Sans">195?</text><text x="565.4" y="648" font-size="10.5" fill="#c8c8c8" font-family="Liberation Sans">210?</text><text x="511.8" y="608" font-size="10.5" fill="#c8c8c8" font-family="Liberation Sans">225?</text><text x="470.4" y="553.9" font-size="10.5" fill="#c8c8c8" font-family="Liberation Sans">240?</text><text x="446.2" y="494.8" font-size="10.5" fill="#c8c8c8" font-family="Liberation Sans">255?</text><text x="449.4" y="432.5" font-size="10.5" fill="#c8c8c8" font-family="Liberation Sans">W</text><text x="446.8" y="370.1" font-size="10.5" fill="#c8c8c8" font-family="Liberation Sans">285?</text><text x="471.4" y="310.5" font-size="10.5" fill="#c8c8c8" font-family="Liberation Sans">300?</text><text x="511.9" y="258.6" font-size="10.5" fill="#c8c8c8" font-family="Liberation Sans">315?</text><text x="567.2" y="218.8" font-size="10.5" fill="#c8c8c8" font-family="Liberation Sans">330?</text><text x="624.2" y="195.5" font-size="10.5" fill="#c8c8c8" font-family="Liberation Sans">345?</text><text x="730.3" y="188.9" font-size="10.5" fill="#c8c8c8" font-family="Liberation Sans">0?</text><text x="727.4" y="192.9" font-size="10.5" fill="#c8c8c8" font-family="Liberation Sans">10?</text><text x="725.9" y="204" font-size="10.5" fill="#c8c8c8" font-family="Liberation Sans">20?</text><text x="723" y="220.7" font-size="10.5" fill="#c8c8c8" font-family="Liberation Sans">30?</text><text x="719.7" y="244.7" font-size="10.5" fill="#c8c8c8" font-family="Liberation Sans">40?</text><text x="715.5" y="275" font-size="10.5" fill="#c8c8c8" font-family="Liberation Sans">50?</text><text x="711.6" y="307.9" font-size="10.5" fill="#c8c8c8" font-family="Liberation Sans">60?</text><text x="706.3" y="345.5" font-size="10.5" fill="#c8c8c8" font-family="Liberation Sans">70?</text><text x="701.2" y="385" font-size="10.5" fill="#c8c8c8" font-family="Liberation Sans">80?</text></g><g opacity="0.92"><rect x="525.8" y="249.7" width="36.8" height="3" fill="#b41414"/><path d="M527.1 242.9 L528.4 244.2 L528.4 258.2 L527.1 259.5 L525.8 258.2 L525.8 244.2Z" fill="#b41414"/><path d="M561.3 242.9 L562.6 244.2 L562.6 258.2 L561.3 259.5 L560.0 258.2 L560.0 244.2Z" fill="#b41414"/><ellipse cx="544.2" cy="251.2" rx="11.4" ry="7.3" fill="#cc0a0a"/><text x="544.2" y="255.2" font-size="11" fill="#ffdcdc" text-anchor="middle" font-family="Liberation Mono">G27</text></g><g opacity="0.92"><rect x="837.8" y="257.1" width="36.8" height="3" fill="#0a0ac8"/><path d="M839.1 250.3 L840.4 251.6 L840.4 265.6 L839.1 266.9 L837.8 265.6 L837.8 251.6Z" fill="#0a0ac8"/><path d="M873.3 250.3 L874.6 251.6 L874.6 265.6 L873.3 266.9 L872.0 265.6 L872.0 251.6Z" fill="#0a0ac8"/><ellipse cx="856.2" cy="258.6" rx="11.4" ry="7.3" fill="#0a0ad2"/><text x="856.2" y="262.6" font-size="11" fill="#dcdcff" text-anchor="middle" font-family="Liberation Mono">G26</text></g><g opacity="0.92"><rect x="562.8" y="303.5" width="36.8" height="3" fill="#1eaa1e"/><path d="M564.1 296.7 L565.4 298.0 L565.4 312.0 L564.1 313.3 L562.8 312.0 L562.8 298.0Z" fill="#1eaa1e"/><path d="M598.3 296.7 L599.6 298.0 L599.6 312.0 L598.3 313.3 L597.0 312.0 L597.0 298.0Z" fill="#1eaa1e"/><ellipse cx="581.2" cy="305.0" rx="11.4" ry="7.3" fill="#14b414"/><text x="581.2" y="309.0" font-size="11" fill="#b4ffb4" text-anchor="middle" font-family="Liberation Mono">G18</text></g><g opacity="0.92"><rect x="474.2" y="332.4" width="36.8" height="3" fill="#1eaa1e"/><path d="M475.5 325.6 L476.8 326.9 L476.8 340.9 L475.5 342.2 L474.2 340.9 L474.2 326.9Z" fill="#1eaa1e"/><path d="M509.7 325.6 L511.0 326.9 L511.0 340.9 L509.7 342.2 L508.4 340.9 L508.4 326.9Z" fill="#1eaa1e"/><ellipse cx="492.6" cy="333.9" rx="11.4" ry="7.3" fill="#14b414"/><text x="492.6" y="337.9" font-size="11" fill="#b4ffb4" text-anchor="middle" font-family="Liberation Mono">G22</text></g><g opacity="0.92"><rect x="606.3" y="377.7" width="36.8" height="3" fill="#1eaa1e"/><path d="M607.6 370.9 L608.9 372.2 L608.9 386.2 L607.6 387.5 L606.3 386.2 L606.3 372.2Z" fill="#1eaa1e"/><path d="M641.8 370.9 L643.1 372.2 L643.1 386.2 L641.8 387.5 L640.5 386.2 L640.5 372.2Z" fill="#1eaa1e"/><ellipse cx="624.7" cy="379.2" rx="11.4" ry="7.3" fill="#14b414"/><text x="624.7" y="383.2" font-size="11" fill="#b4ffb4" text-anchor="middle" font-family="Liberation Mono">G21</text></g><g opacity="0.92"><rect x="747.1" y="309.8" width="36.8" height="3" fill="#1eaa1e"/><path d="M748.4 303.0 L749.7 304.3 L749.7 318.3 L748.4 319.6 L747.1 318.3 L747.1 304.3Z" fill="#1eaa1e"/><path d="M782.6 303.0 L783.9 304.3 L783.9 318.3 L782.6 319.6 L781.3 318.3 L781.3 304.3Z" fill="#1eaa1e"/><ellipse cx="765.5" cy="311.3" rx="11.4" ry="7.3" fill="#14b414"/><text x="765.5" y="315.3" font-size="11" fill="#b4ffb4" text-anchor="middle" font-family="Liberation Mono">G15</text></g><g opacity="0.92"><rect x="917.8" y="426.7" width="36.8" height="3" fill="#b41414"/><path d="M919.1 419.9 L920.4 421.2 L920.4 435.2 L919.1 436.5 L917.8 435.2 L917.8 421.2Z" fill="#b41414"/><path d="M953.3 419.9 L954.6 421.2 L954.6 435.2 L953.3 436.5 L952.0 435.2 L952.0 421.2Z" fill="#b41414"/><ellipse cx="936.2" cy="428.2" rx="11.4" ry="7.3" fill="#cc0a0a"/><text x="936.2" y="432.2" font-size="11" fill="#ffdcdc" text-anchor="middle" font-family="Liberation Mono">G5</text></g><circle cx="145.5" cy="446" r="125.5" fill="none" stroke="#c8c8c8" stroke-width="1" shape-rendering="crispEdges"/><circle cx="145.5" cy="446" r="62.75" fill="none" stroke="#c8c8c8" stroke-width="1" shape-rendering="crispEdges"/><rect x="145.5" y="446" width="1" height="1" fill="#c8c8c8"/><rect x="140" y="315.5" width="10" height="10" fill="#000"/><text x="141" y="324.5" font-size="10.5" fill="#c8c8c8" font-family="Liberation Sans">N</text><rect x="140" y="566.5" width="10" height="10" fill="#000"/><text x="141" y="575.5" font-size="10.5" fill="#c8c8c8" font-family="Liberation Sans">S</text><rect x="12" y="441" width="12" height="10" fill="#000"/><text x="13" y="450" font-size="10.5" fill="#c8c8c8" font-family="Liberation Sans">W</text><rect x="264" y="441" width="10" height="10" fill="#000"/><text x="265" y="450" font-size="10.5" fill="#c8c8c8" font-family="Liberation Sans">E</text><g opacity="0.92"><rect x="44.0" y="353.0" width="38.6" height="3" fill="#b41414"/><path d="M45.3 345.2 L46.6 346.5 L46.6 362.5 L45.3 363.8 L44.0 362.5 L44.0 346.5Z" fill="#b41414"/><path d="M81.3 345.2 L82.6 346.5 L82.6 362.5 L81.3 363.8 L80.0 362.5 L80.0 346.5Z" fill="#b41414"/><ellipse cx="63.3" cy="354.5" rx="11.8" ry="8.4" fill="#cc0a0a"/><text x="63.3" y="358.6" font-size="11.5" fill="#ffdcdc" text-anchor="middle" font-family="Liberation Mono">G27</text></g><g opacity="0.92"><rect x="193.7" y="368.5" width="38.6" height="3" fill="#0a0ac8"/><path d="M195.0 360.7 L196.3 362.0 L196.3 378.0 L195.0 379.3 L193.7 378.0 L193.7 362.0Z" fill="#0a0ac8"/><path d="M231.0 360.7 L232.3 362.0 L232.3 378.0 L231.0 379.3 L229.7 378.0 L229.7 362.0Z" fill="#0a0ac8"/><ellipse cx="213.0" cy="370.0" rx="11.8" ry="8.4" fill="#0a0ad2"/><text x="213.0" y="374.1" font-size="11.5" fill="#dcdcff" text-anchor="middle" font-family="Liberation Mono">G26</text></g><g opacity="0.92"><rect x="29.5" y="402.1" width="38.6" height="3" fill="#1eaa1e"/><path d="M30.8 394.3 L32.1 395.6 L32.1 411.6 L30.8 412.9 L29.5 411.6 L29.5 395.6Z" fill="#1eaa1e"/><path d="M66.8 394.3 L68.1 395.6 L68.1 411.6 L66.8 412.9 L65.5 411.6 L65.5 395.6Z" fill="#1eaa1e"/><ellipse cx="48.8" cy="403.6" rx="11.8" ry="8.4" fill="#14b414"/><text x="48.8" y="407.7" font-size="11.5" fill="#b4ffb4" text-anchor="middle" font-family="Liberation Mono">G22</text></g><g opacity="0.92"><rect x="79.4" y="397.9" width="38.6" height="3" fill="#1eaa1e"/><path d="M80.7 390.1 L82.0 391.4 L82.0 407.4 L80.7 408.7 L79.4 407.4 L79.4 391.4Z" fill="#1eaa1e"/><path d="M116.7 390.1 L118.0 391.4 L118.0 407.4 L116.7 408.7 L115.4 407.4 L115.4 391.4Z" fill="#1eaa1e"/><ellipse cx="98.7" cy="399.4" rx="11.8" ry="8.4" fill="#14b414"/><text x="98.7" y="403.5" font-size="11.5" fill="#b4ffb4" text-anchor="middle" font-family="Liberation Mono">G18</text></g><g opacity="0.92"><rect x="147.7" y="402.5" width="38.6" height="3" fill="#1eaa1e"/><path d="M149.0 394.7 L150.3 396.0 L150.3 412.0 L149.0 413.3 L147.7 412.0 L147.7 396.0Z" fill="#1eaa1e"/><path d="M185.0 394.7 L186.3 396.0 L186.3 412.0 L185.0 413.3 L183.7 412.0 L183.7 396.0Z" fill="#1eaa1e"/><ellipse cx="167.0" cy="404.0" rx="11.8" ry="8.4" fill="#14b414"/><text x="167.0" y="408.1" font-size="11.5" fill="#b4ffb4" text-anchor="middle" font-family="Liberation Mono">G15</text></g><g opacity="0.92"><rect x="99.3" y="427.9" width="38.6" height="3" fill="#1eaa1e"/><path d="M100.6 420.1 L101.9 421.4 L101.9 437.4 L100.6 438.7 L99.3 437.4 L99.3 421.4Z" fill="#1eaa1e"/><path d="M136.6 420.1 L137.9 421.4 L137.9 437.4 L136.6 438.7 L135.3 437.4 L135.3 421.4Z" fill="#1eaa1e"/><ellipse cx="118.6" cy="429.4" rx="11.8" ry="8.4" fill="#14b414"/><text x="118.6" y="433.5" font-size="11.5" fill="#b4ffb4" text-anchor="middle" font-family="Liberation Mono">G21</text></g><g opacity="0.92"><rect x="235.0" y="444.5" width="38.6" height="3" fill="#b41414"/><path d="M236.3 436.7 L237.6 438.0 L237.6 454.0 L236.3 455.3 L235.0 454.0 L235.0 438.0Z" fill="#b41414"/><path d="M272.3 436.7 L273.6 438.0 L273.6 454.0 L272.3 455.3 L271.0 454.0 L271.0 438.0Z" fill="#b41414"/><ellipse cx="254.3" cy="446.0" rx="11.8" ry="8.4" fill="#cc0a0a"/><text x="254.3" y="450.1" font-size="11.5" fill="#ffdcdc" text-anchor="middle" font-family="Liberation Mono">G5</text></g></svg>
<svg style="left:0;top:0" width="1366" height="746" viewBox="0 0 1366 746"><text x="1125" y="196.5" font-size="11" fill="#d2d2d2" font-family="Liberation Sans">Longitude</text><rect x="1184" y="187" width="172" height="11" fill="#3c3c3c"/><text x="1351" y="196.5" font-size="11" fill="#d2d2d2" text-anchor="end" font-family="Liberation Sans">106.466034</text><text x="1125" y="209.5" font-size="11" fill="#d2d2d2" font-family="Liberation Sans">Latitude</text><rect x="1184" y="200" width="172" height="11" fill="#3c3c3c"/><text x="1351" y="209.5" font-size="11" fill="#d2d2d2" text-anchor="end" font-family="Liberation Sans">29.568551</text><text x="1125" y="222.5" font-size="11" fill="#d2d2d2" font-family="Liberation Sans">Altitude</text><rect x="1184" y="213" width="172" height="11" fill="#3c3c3c"/><text x="1356" y="222.5" font-size="11" fill="#d2d2d2" text-anchor="end" font-family="Liberation Sans">206.00 m</text><text x="1125" y="235.5" font-size="11" fill="#d2d2d2" font-family="Liberation Sans">TTFF</text><rect x="1184" y="226" width="172" height="11" fill="#3c3c3c"/><text x="1125" y="248.5" font-size="11" fill="#d2d2d2" font-family="Liberation Sans">Fix Mode</text><rect x="1184" y="239" width="172" height="11" fill="#3c3c3c"/><text x="1356" y="248.5" font-size="11" fill="#22cc22" text-anchor="end" font-family="Liberation Sans">3D</text><text x="1125" y="261.5" font-size="11" fill="#d2d2d2" font-family="Liberation Sans">3D Acc.</text><rect x="1184" y="252" width="172" height="11" fill="#3c3c3c"/><text x="1125" y="274.5" font-size="11" fill="#d2d2d2" font-family="Liberation Sans">2D Acc.</text><rect x="1184" y="265" width="172" height="11" fill="#3c3c3c"/><text x="1125" y="287.5" font-size="11" fill="#d2d2d2" font-family="Liberation Sans">PDOP</text><rect x="1184" y="278" width="172" height="11" fill="#3c3c3c"/><text x="1125" y="300.5" font-size="11" fill="#d2d2d2" font-family="Liberation Sans">HDOP</text><rect x="1184" y="291" width="172" height="11" fill="#3c3c3c"/><text x="1125" y="313.5" font-size="11" fill="#d2d2d2" font-family="Liberation Sans">Satellites</text><text x="1185" y="287.5" font-size="11" fill="#d2d2d2" font-family="Liberation Sans">0</text><rect x="1240" y="279" width="3" height="10" fill="#1ec81e"/><text x="1244" y="287.5" font-size="11" fill="#d2d2d2" font-family="Liberation Sans">6.7</text><text x="1356" y="287.5" font-size="11" fill="#d2d2d2" text-anchor="end" font-family="Liberation Sans">20</text><text x="1185" y="300.5" font-size="11" fill="#d2d2d2" font-family="Liberation Sans">0</text><rect x="1231" y="292" width="3" height="10" fill="#1ec81e"/><text x="1235" y="300.5" font-size="11" fill="#d2d2d2" font-family="Liberation Sans">5.6</text><text x="1356" y="300.5" font-size="11" fill="#d2d2d2" text-anchor="end" font-family="Liberation Sans">20</text><rect x="1184.0" y="304" width="13" height="11" fill="#00c000"/><rect x="1198.3" y="304" width="13" height="11" fill="#00c000"/><rect x="1212.6" y="304" width="13" height="11" fill="#00c000"/><rect x="1226.9" y="304" width="13" height="11" fill="#00c000"/><rect x="1241.2" y="304" width="13" height="11" fill="#c8c8c8"/><rect x="1255.5" y="304" width="13" height="11" fill="#c8c8c8"/><rect x="1269.8" y="304" width="13" height="11" fill="#0000c8"/><rect x="1284.1" y="304" width="13" height="11" fill="#c8c8c8"/><rect x="1298.4" y="304" width="13" height="11" fill="#3c3c3c"/><rect x="1312.7" y="304" width="13" height="11" fill="#3c3c3c"/><rect x="1327.0" y="304" width="13" height="11" fill="#3c3c3c"/><rect x="1341.3" y="304" width="13" height="11" fill="#c8c8c8"/><line x1="1240.00" y1="420.50" x2="1240.00" y2="407.00" stroke="#c8c8c8" stroke-width="1" shape-rendering="crispEdges"/><line x1="1245.20" y1="420.83" x2="1246.02" y2="414.38" stroke="#c8c8c8" stroke-width="1" shape-rendering="crispEdges"/><line x1="1250.32" y1="421.80" x2="1251.94" y2="415.51" stroke="#c8c8c8" stroke-width="1" shape-rendering="crispEdges"/><line x1="1255.28" y1="423.41" x2="1257.67" y2="417.37" stroke="#c8c8c8" stroke-width="1" shape-rendering="crispEdges"/><line x1="1259.99" y1="425.63" x2="1263.12" y2="419.94" stroke="#c8c8c8" stroke-width="1" shape-rendering="crispEdges"/><line x1="1264.39" y1="428.43" x2="1272.33" y2="417.50" stroke="#c8c8c8" stroke-width="1" shape-rendering="crispEdges"/><line x1="1268.41" y1="431.75" x2="1272.86" y2="427.01" stroke="#c8c8c8" stroke-width="1" shape-rendering="crispEdges"/><line x1="1271.98" y1="435.55" x2="1276.98" y2="431.40" stroke="#c8c8c8" stroke-width="1" shape-rendering="crispEdges"/><line x1="1275.04" y1="439.76" x2="1280.53" y2="436.28" stroke="#c8c8c8" stroke-width="1" shape-rendering="crispEdges"/><line x1="1277.55" y1="444.33" x2="1283.43" y2="441.56" stroke="#c8c8c8" stroke-width="1" shape-rendering="crispEdges"/><line x1="1279.47" y1="449.18" x2="1292.31" y2="445.00" stroke="#c8c8c8" stroke-width="1" shape-rendering="crispEdges"/><line x1="1280.76" y1="454.22" x2="1287.15" y2="453.01" stroke="#c8c8c8" stroke-width="1" shape-rendering="crispEdges"/><line x1="1281.42" y1="459.39" x2="1287.91" y2="458.99" stroke="#c8c8c8" stroke-width="1" shape-rendering="crispEdges"/><line x1="1281.42" y1="464.61" x2="1287.91" y2="465.01" stroke="#c8c8c8" stroke-width="1" shape-rendering="crispEdges"/><line x1="1280.76" y1="469.78" x2="1287.15" y2="470.99" stroke="#c8c8c8" stroke-width="1" shape-rendering="crispEdges"/><line x1="1279.47" y1="474.82" x2="1292.31" y2="479.00" stroke="#c8c8c8" stroke-width="1" shape-rendering="crispEdges"/><line x1="1277.55" y1="479.67" x2="1283.43" y2="482.44" stroke="#c8c8c8" stroke-width="1" shape-rendering="crispEdges"/><line x1="1275.04" y1="484.24" x2="1280.53" y2="487.72" stroke="#c8c8c8" stroke-width="1" shape-rendering="crispEdges"/><line x1="1271.98" y1="488.45" x2="1276.98" y2="492.60" stroke="#c8c8c8" stroke-width="1" shape-rendering="crispEdges"/><line x1="1268.41" y1="492.25" x2="1272.86" y2="496.99" stroke="#c8c8c8" stroke-width="1" shape-rendering="crispEdges"/><line x1="1264.39" y1="495.57" x2="1272.33" y2="506.50" stroke="#c8c8c8" stroke-width="1" shape-rendering="crispEdges"/><line x1="1259.99" y1="498.37" x2="1263.12" y2="504.06" stroke="#c8c8c8" stroke-width="1" shape-rendering="crispEdges"/><line x1="1255.28" y1="500.59" x2="1257.67" y2="506.63" stroke="#c8c8c8" stroke-width="1" shape-rendering="crispEdges"/><line x1="1250.32" y1="502.20" x2="1251.94" y2="508.49" stroke="#c8c8c8" stroke-width="1" shape-rendering="crispEdges"/><line x1="1245.20" y1="503.17" x2="1246.02" y2="509.62" stroke="#c8c8c8" stroke-width="1" shape-rendering="crispEdges"/><line x1="1240.00" y1="503.50" x2="1240.00" y2="517.00" stroke="#c8c8c8" stroke-width="1" shape-rendering="crispEdges"/><line x1="1234.80" y1="503.17" x2="1233.98" y2="509.62" stroke="#c8c8c8" stroke-width="1" shape-rendering="crispEdges"/><line x1="1229.68" y1="502.20" x2="1228.06" y2="508.49" stroke="#c8c8c8" stroke-width="1" shape-rendering="crispEdges"/><line x1="1224.72" y1="500.59" x2="1222.33" y2="506.63" stroke="#c8c8c8" stroke-width="1" shape-rendering="crispEdges"/><line x1="1220.01" y1="498.37" x2="1216.88" y2="504.06" stroke="#c8c8c8" stroke-width="1" shape-rendering="crispEdges"/><line x1="1215.61" y1="495.57" x2="1207.67" y2="506.50" stroke="#c8c8c8" stroke-width="1" shape-rendering="crispEdges"/><line x1="1211.59" y1="492.25" x2="1207.14" y2="496.99" stroke="#c8c8c8" stroke-width="1" shape-rendering="crispEdges"/><line x1="1208.02" y1="488.45" x2="1203.02" y2="492.60" stroke="#c8c8c8" stroke-width="1" shape-rendering="crispEdges"/><line x1="1204.96" y1="484.24" x2="1199.47" y2="487.72" stroke="#c8c8c8" stroke-width="1" shape-rendering="crispEdges"/><line x1="1202.45" y1="479.67" x2="1196.57" y2="482.44" stroke="#c8c8c8" stroke-width="1" shape-rendering="crispEdges"/><line x1="1200.53" y1="474.82" x2="1187.69" y2="479.00" stroke="#c8c8c8" stroke-width="1" shape-rendering="crispEdges"/><line x1="1199.24" y1="469.78" x2="1192.85" y2="470.99" stroke="#c8c8c8" stroke-width="1" shape-rendering="crispEdges"/><line x1="1198.58" y1="464.61" x2="1192.09" y2="465.01" stroke="#c8c8c8" stroke-width="1" shape-rendering="crispEdges"/><line x1="1198.58" y1="459.39" x2="1192.09" y2="458.99" stroke="#c8c8c8" stroke-width="1" shape-rendering="crispEdges"/><line x1="1199.24" y1="454.22" x2="1192.85" y2="453.01" stroke="#c8c8c8" stroke-width="1" shape-rendering="crispEdges"/><line x1="1200.53" y1="449.18" x2="1187.69" y2="445.00" stroke="#c8c8c8" stroke-width="1" shape-rendering="crispEdges"/><line x1="1202.45" y1="444.33" x2="1196.57" y2="441.56" stroke="#c8c8c8" stroke-width="1" shape-rendering="crispEdges"/><line x1="1204.96" y1="439.76" x2="1199.47" y2="436.28" stroke="#c8c8c8" stroke-width="1" shape-rendering="crispEdges"/><line x1="1208.02" y1="435.55" x2="1203.02" y2="431.40" stroke="#c8c8c8" stroke-width="1" shape-rendering="crispEdges"/><line x1="1211.59" y1="431.75" x2="1207.14" y2="427.01" stroke="#c8c8c8" stroke-width="1" shape-rendering="crispEdges"/><line x1="1215.61" y1="428.43" x2="1207.67" y2="417.50" stroke="#c8c8c8" stroke-width="1" shape-rendering="crispEdges"/><line x1="1220.01" y1="425.63" x2="1216.88" y2="419.94" stroke="#c8c8c8" stroke-width="1" shape-rendering="crispEdges"/><line x1="1224.72" y1="423.41" x2="1222.33" y2="417.37" stroke="#c8c8c8" stroke-width="1" shape-rendering="crispEdges"/><line x1="1229.68" y1="421.80" x2="1228.06" y2="415.51" stroke="#c8c8c8" stroke-width="1" shape-rendering="crispEdges"/><line x1="1234.80" y1="420.83" x2="1233.98" y2="414.38" stroke="#c8c8c8" stroke-width="1" shape-rendering="crispEdges"/><text x="1240.0" y="401.9" font-size="11" fill="#c8c8c8" text-anchor="middle" font-family="Liberation Sans">0</text><text x="1277.8" y="414.2" font-size="11" fill="#c8c8c8" text-anchor="middle" font-family="Liberation Sans">1</text><text x="1301.2" y="446.3" font-size="11" fill="#c8c8c8" text-anchor="middle" font-family="Liberation Sans">2</text><text x="1301.2" y="486.1" font-size="11" fill="#c8c8c8" text-anchor="middle" font-family="Liberation Sans">3</text><text x="1277.8" y="518.2" font-size="11" fill="#c8c8c8" text-anchor="middle" font-family="Liberation Sans">4</text><text x="1240.0" y="530.5" font-size="11" fill="#c8c8c8" text-anchor="middle" font-family="Liberation Sans">5</text><text x="1202.2" y="518.2" font-size="11" fill="#c8c8c8" text-anchor="middle" font-family="Liberation Sans">6</text><text x="1178.8" y="486.1" font-size="11" fill="#c8c8c8" text-anchor="middle" font-family="Liberation Sans">7</text><text x="1178.8" y="446.3" font-size="11" fill="#c8c8c8" text-anchor="middle" font-family="Liberation Sans">8</text><text x="1202.2" y="414.2" font-size="11" fill="#c8c8c8" text-anchor="middle" font-family="Liberation Sans">9</text><path d="M1259.48 413.79 L1246.42 458.12 L1238.08 454.75Z" fill="#c8c8c8" stroke="#c8c8c8" stroke-width="1" stroke-linejoin="round"/><path d="M1250.71 435.48 L1245.25 454.41 L1241.49 452.90Z" fill="#000"/><path d="M1277.67 451.91 L1247.22 465.76 L1244.37 455.13Z" fill="#c8c8c8" stroke="#c8c8c8" stroke-width="1" stroke-linejoin="round"/><path d="M1260.72 456.45 L1249.33 462.06 L1248.05 457.28Z" fill="#000"/><circle cx="1240" cy="462" r="6.2" fill="#000" stroke="#c8c8c8" stroke-width="2.4"/><text x="1123" y="535.5" font-size="11" fill="#c8c8c8" font-family="Liberation Sans">206.00 m</text><text x="1357" y="535.5" font-size="11" fill="#c8c8c8" text-anchor="end" font-family="Liberation Sans">x100</text><line x1="1240.30" y1="592.70" x2="1240.30" y2="578.20" stroke="#c8c8c8" stroke-width="1" shape-rendering="crispEdges"/><line x1="1245.11" y1="592.45" x2="1245.74" y2="586.48" stroke="#c8c8c8" stroke-width="1" shape-rendering="crispEdges"/><line x1="1249.86" y1="593.21" x2="1251.11" y2="587.34" stroke="#c8c8c8" stroke-width="1" shape-rendering="crispEdges"/><line x1="1254.51" y1="594.45" x2="1256.37" y2="588.75" stroke="#c8c8c8" stroke-width="1" shape-rendering="crispEdges"/><line x1="1259.01" y1="596.18" x2="1261.45" y2="590.70" stroke="#c8c8c8" stroke-width="1" shape-rendering="crispEdges"/><line x1="1263.30" y1="598.36" x2="1268.05" y2="590.14" stroke="#c8c8c8" stroke-width="1" shape-rendering="crispEdges"/><line x1="1267.34" y1="600.99" x2="1270.86" y2="596.13" stroke="#c8c8c8" stroke-width="1" shape-rendering="crispEdges"/><line x1="1271.08" y1="604.02" x2="1275.09" y2="599.56" stroke="#c8c8c8" stroke-width="1" shape-rendering="crispEdges"/><line x1="1274.48" y1="607.42" x2="1278.94" y2="603.41" stroke="#c8c8c8" stroke-width="1" shape-rendering="crispEdges"/><line x1="1277.51" y1="611.16" x2="1282.37" y2="607.64" stroke="#c8c8c8" stroke-width="1" shape-rendering="crispEdges"/><line x1="1280.14" y1="615.20" x2="1288.36" y2="610.45" stroke="#c8c8c8" stroke-width="1" shape-rendering="crispEdges"/><line x1="1282.32" y1="619.49" x2="1287.80" y2="617.05" stroke="#c8c8c8" stroke-width="1" shape-rendering="crispEdges"/><line x1="1284.05" y1="623.99" x2="1289.75" y2="622.13" stroke="#c8c8c8" stroke-width="1" shape-rendering="crispEdges"/><line x1="1285.29" y1="628.64" x2="1291.16" y2="627.39" stroke="#c8c8c8" stroke-width="1" shape-rendering="crispEdges"/><line x1="1286.05" y1="633.39" x2="1292.02" y2="632.76" stroke="#c8c8c8" stroke-width="1" shape-rendering="crispEdges"/><line x1="1285.80" y1="638.20" x2="1300.30" y2="638.20" stroke="#c8c8c8" stroke-width="1" shape-rendering="crispEdges"/><line x1="1286.05" y1="643.01" x2="1292.02" y2="643.64" stroke="#c8c8c8" stroke-width="1" shape-rendering="crispEdges"/><line x1="1285.29" y1="647.76" x2="1291.16" y2="649.01" stroke="#c8c8c8" stroke-width="1" shape-rendering="crispEdges"/><line x1="1284.05" y1="652.41" x2="1289.75" y2="654.27" stroke="#c8c8c8" stroke-width="1" shape-rendering="crispEdges"/><line x1="1282.32" y1="656.91" x2="1287.80" y2="659.35" stroke="#c8c8c8" stroke-width="1" shape-rendering="crispEdges"/><line x1="1280.14" y1="661.20" x2="1288.36" y2="665.95" stroke="#c8c8c8" stroke-width="1" shape-rendering="crispEdges"/><line x1="1277.51" y1="665.24" x2="1282.37" y2="668.76" stroke="#c8c8c8" stroke-width="1" shape-rendering="crispEdges"/><line x1="1274.48" y1="668.98" x2="1278.94" y2="672.99" stroke="#c8c8c8" stroke-width="1" shape-rendering="crispEdges"/><line x1="1271.08" y1="672.38" x2="1275.09" y2="676.84" stroke="#c8c8c8" stroke-width="1" shape-rendering="crispEdges"/><line x1="1267.34" y1="675.41" x2="1270.86" y2="680.27" stroke="#c8c8c8" stroke-width="1" shape-rendering="crispEdges"/><line x1="1263.30" y1="678.04" x2="1268.05" y2="686.26" stroke="#c8c8c8" stroke-width="1" shape-rendering="crispEdges"/><line x1="1259.01" y1="680.22" x2="1261.45" y2="685.70" stroke="#c8c8c8" stroke-width="1" shape-rendering="crispEdges"/><line x1="1254.51" y1="681.95" x2="1256.37" y2="687.65" stroke="#c8c8c8" stroke-width="1" shape-rendering="crispEdges"/><line x1="1249.86" y1="683.19" x2="1251.11" y2="689.06" stroke="#c8c8c8" stroke-width="1" shape-rendering="crispEdges"/><line x1="1245.11" y1="683.95" x2="1245.74" y2="689.92" stroke="#c8c8c8" stroke-width="1" shape-rendering="crispEdges"/><line x1="1240.30" y1="683.70" x2="1240.30" y2="698.20" stroke="#c8c8c8" stroke-width="1" shape-rendering="crispEdges"/><line x1="1235.49" y1="683.95" x2="1234.86" y2="689.92" stroke="#c8c8c8" stroke-width="1" shape-rendering="crispEdges"/><line x1="1230.74" y1="683.19" x2="1229.49" y2="689.06" stroke="#c8c8c8" stroke-width="1" shape-rendering="crispEdges"/><line x1="1226.09" y1="681.95" x2="1224.23" y2="687.65" stroke="#c8c8c8" stroke-width="1" shape-rendering="crispEdges"/><line x1="1221.59" y1="680.22" x2="1219.15" y2="685.70" stroke="#c8c8c8" stroke-width="1" shape-rendering="crispEdges"/><line x1="1217.30" y1="678.04" x2="1212.55" y2="686.26" stroke="#c8c8c8" stroke-width="1" shape-rendering="crispEdges"/><line x1="1213.26" y1="675.41" x2="1209.74" y2="680.27" stroke="#c8c8c8" stroke-width="1" shape-rendering="crispEdges"/><line x1="1209.52" y1="672.38" x2="1205.51" y2="676.84" stroke="#c8c8c8" stroke-width="1" shape-rendering="crispEdges"/><line x1="1206.12" y1="668.98" x2="1201.66" y2="672.99" stroke="#c8c8c8" stroke-width="1" shape-rendering="crispEdges"/><line x1="1203.09" y1="665.24" x2="1198.23" y2="668.76" stroke="#c8c8c8" stroke-width="1" shape-rendering="crispEdges"/><line x1="1200.46" y1="661.20" x2="1192.24" y2="665.95" stroke="#c8c8c8" stroke-width="1" shape-rendering="crispEdges"/><line x1="1198.28" y1="656.91" x2="1192.80" y2="659.35" stroke="#c8c8c8" stroke-width="1" shape-rendering="crispEdges"/><line x1="1196.55" y1="652.41" x2="1190.85" y2="654.27" stroke="#c8c8c8" stroke-width="1" shape-rendering="crispEdges"/><line x1="1195.31" y1="647.76" x2="1189.44" y2="649.01" stroke="#c8c8c8" stroke-width="1" shape-rendering="crispEdges"/><line x1="1194.55" y1="643.01" x2="1188.58" y2="643.64" stroke="#c8c8c8" stroke-width="1" shape-rendering="crispEdges"/><line x1="1194.80" y1="638.20" x2="1180.30" y2="638.20" stroke="#c8c8c8" stroke-width="1" shape-rendering="crispEdges"/><line x1="1194.55" y1="633.39" x2="1188.58" y2="632.76" stroke="#c8c8c8" stroke-width="1" shape-rendering="crispEdges"/><line x1="1195.31" y1="628.64" x2="1189.44" y2="627.39" stroke="#c8c8c8" stroke-width="1" shape-rendering="crispEdges"/><line x1="1196.55" y1="623.99" x2="1190.85" y2="622.13" stroke="#c8c8c8" stroke-width="1" shape-rendering="crispEdges"/><line x1="1198.28" y1="619.49" x2="1192.80" y2="617.05" stroke="#c8c8c8" stroke-width="1" shape-rendering="crispEdges"/><line x1="1200.46" y1="615.20" x2="1192.24" y2="610.45" stroke="#c8c8c8" stroke-width="1" shape-rendering="crispEdges"/><line x1="1203.09" y1="611.16" x2="1198.23" y2="607.64" stroke="#c8c8c8" stroke-width="1" shape-rendering="crispEdges"/><line x1="1206.12" y1="607.42" x2="1201.66" y2="603.41" stroke="#c8c8c8" stroke-width="1" shape-rendering="crispEdges"/><line x1="1209.52" y1="604.02" x2="1205.51" y2="599.56" stroke="#c8c8c8" stroke-width="1" shape-rendering="crispEdges"/><line x1="1213.26" y1="600.99" x2="1209.74" y2="596.13" stroke="#c8c8c8" stroke-width="1" shape-rendering="crispEdges"/><line x1="1217.30" y1="598.36" x2="1212.55" y2="590.14" stroke="#c8c8c8" stroke-width="1" shape-rendering="crispEdges"/><line x1="1221.59" y1="596.18" x2="1219.15" y2="590.70" stroke="#c8c8c8" stroke-width="1" shape-rendering="crispEdges"/><line x1="1226.09" y1="594.45" x2="1224.23" y2="588.75" stroke="#c8c8c8" stroke-width="1" shape-rendering="crispEdges"/><line x1="1230.74" y1="593.21" x2="1229.49" y2="587.34" stroke="#c8c8c8" stroke-width="1" shape-rendering="crispEdges"/><line x1="1235.49" y1="592.45" x2="1234.86" y2="586.48" stroke="#c8c8c8" stroke-width="1" shape-rendering="crispEdges"/><line x1="1240.30" y1="638.20" x2="1221.64" y2="662.96" stroke="#c8c8c8" stroke-width="3.6" stroke-linecap="round"/><line x1="1226.80" y1="638.32" x2="1277.80" y2="637.87" stroke="#c8c8c8" stroke-width="3.2" stroke-linecap="round"/><line x1="1253.01" y1="652.32" x2="1212.87" y2="607.73" stroke="#c8c8c8" stroke-width="1.1" stroke-linecap="round"/><path d="M1236.3 638.2 L1240.3 634.2 L1244.3 638.2 L1240.3 642.2Z" fill="#c8c8c8" transform="rotate(35 1240.3 638.2)"/><text x="1123" y="577" font-size="11" fill="#c8c8c8" font-family="Liberation Sans">07:14:53.000</text><text x="1358" y="577" font-size="11" fill="#c8c8c8" text-anchor="end" font-family="Liberation Sans">UTC</text><text x="1123" y="708" font-size="11" fill="#c8c8c8" font-family="Liberation Sans">Tuesday</text></svg>
<svg style="left:292px;top:693px" width="180" height="26">
</svg>
<svg style="left:294.5px;top:700px" width="16" height="16"><circle cx="8.4" cy="7.5" r="7" fill="none" stroke="#000" stroke-width="1.1"/><circle cx="8.4" cy="7.5" r="3" fill="none" stroke="#000" stroke-width="1.1"/><circle cx="8.4" cy="7.5" r="0.8" fill="#000"/></svg>
<div class="a" style="left:314px;top:697px;width:22px;height:21px;background:#f7f7f7;border-left:1px solid #a8a8a8;border-top:1px solid #a8a8a8;border-right:1px solid #fff;border-bottom:1px solid #fff;box-sizing:border-box"></div>
<svg style="left:317.0px;top:700px" width="16" height="16"><circle cx="8.5" cy="8" r="7" fill="none" stroke="#000" stroke-width="1.1"/><circle cx="8.5" cy="8" r="5" fill="none" stroke="#000" stroke-width="1.1"/><circle cx="8.5" cy="8" r="0.7" fill="#000"/></svg>
<div class="a" style="left:339px;top:699px;width:1px;height:17px;background:#a0a0a0"></div>
<div class="a" style="left:340px;top:699px;width:1px;height:17px;background:#fff"></div>
<div class="a" style="left:343px;top:697px;width:22px;height:21px;background:#f7f7f7;border-left:1px solid #a8a8a8;border-top:1px solid #a8a8a8;border-right:1px solid #fff;border-bottom:1px solid #fff;box-sizing:border-box"></div>
<svg style="left:346.0px;top:700px" width="16" height="16"><circle cx="8" cy="8" r="7.2" fill="#e8f8f8" stroke="#000" stroke-width="0.8"/><path d="M8 8 L1 8 A7 7 0 0 1 8 1Z" fill="#30b040"/><path d="M8 8 L8 1 A7 7 0 0 1 15 8Z" fill="#50d0e0"/><path d="M8 8 L1 8 A7 7 0 0 0 8 15Z" fill="#50d0e0"/><path d="M8 8 L15 8 A7 7 0 0 1 8 15Z" fill="#102080"/><path d="M8 1 V15 M1 8 H15 M3 3 L13 13 M13 3 L3 13" stroke="#000" stroke-width="0.8"/><circle cx="8" cy="8" r="1.6" fill="#000"/></svg>
<div class="a" style="left:366px;top:697px;width:22px;height:21px;background:#f7f7f7;border-left:1px solid #a8a8a8;border-top:1px solid #a8a8a8;border-right:1px solid #fff;border-bottom:1px solid #fff;box-sizing:border-box"></div>
<svg style="left:369.0px;top:700px" width="16" height="16"><circle cx="8" cy="8" r="7.2" fill="#fff" stroke="#000" stroke-width="1"/><path d="M3 4 Q6 7 5 12 M8 8 Q11 5 13 6 M8 8 Q9 11 11 13 M5 8 H8" stroke="#c03030" fill="none" stroke-width="0.9"/></svg>
<div class="a" style="left:389px;top:697px;width:22px;height:21px;background:#f7f7f7;border-left:1px solid #a8a8a8;border-top:1px solid #a8a8a8;border-right:1px solid #fff;border-bottom:1px solid #fff;box-sizing:border-box"></div>
<svg style="left:392.0px;top:700px" width="16" height="16"><rect x="1" y="3" width="2" height="11" fill="#108888"/><rect x="13" y="3" width="2" height="11" fill="#108888"/><rect x="2" y="7.5" width="12" height="2" fill="#108888"/><ellipse cx="8" cy="8.5" rx="4.3" ry="4.6" fill="#108888"/></svg>
<div class="a" style="left:412px;top:697px;width:22px;height:21px;background:#f7f7f7;border-left:1px solid #a8a8a8;border-top:1px solid #a8a8a8;border-right:1px solid #fff;border-bottom:1px solid #fff;box-sizing:border-box"></div>
<svg style="left:415.0px;top:700px" width="16" height="16"><text x="8.5" y="5.5" font-size="6" text-anchor="middle" font-family="Liberation Sans" font-weight="bold">N</text><text x="2.5" y="11" font-size="6" text-anchor="middle" font-family="Liberation Sans" font-weight="bold">W</text><text x="14" y="11" font-size="6" text-anchor="middle" font-family="Liberation Sans" font-weight="bold">E</text><text x="8.5" y="16.5" font-size="6" text-anchor="middle" font-family="Liberation Sans" font-weight="bold">S</text><path d="M8.5 6 L10 9 L8.5 12 L7 9Z" fill="#000"/></svg>
<div class="a" style="left:435px;top:697px;width:22px;height:21px;background:#f7f7f7;border-left:1px solid #a8a8a8;border-top:1px solid #a8a8a8;border-right:1px solid #fff;border-bottom:1px solid #fff;box-sizing:border-box"></div>
<svg style="left:438.0px;top:700px" width="16" height="16"><path d="M1 15 L8 1" stroke="#000" stroke-width="1"/><text x="8" y="7" font-size="6.5" font-family="Liberation Sans" font-weight="bold">0&#176;</text><text x="4" y="15.5" font-size="6.5" font-family="Liberation Sans" font-weight="bold">80&#176;</text><rect x="8" y="9" width="1" height="1" fill="#000"/><rect x="10" y="9" width="1" height="1" fill="#000"/></svg>
<svg style="left:786px;top:726px" width="17" height="8" shape-rendering="crispEdges"><rect x="0" y="3" width="17" height="2" fill="#000"/><rect x="5" y="0" width="7" height="8" rx="1.5" fill="#30d030" stroke="#000" stroke-width="1"/><rect x="8" y="0" width="1" height="8" fill="#000"/></svg>
<div class="a" style="left:0;top:739px;width:1366px;height:1px;background:#a9b0b8"></div>
<div class="a" style="left:0;top:740px;width:1366px;height:6px;background:linear-gradient(90deg,#66737f 0%,#7a8795 11%,#929eac 26%,#9aa6b2 40%,#a4aeb8 52%,#b4bcc4 60%,#909eac 66%,#5f6d7d 74%,#7e8a98 84%,#6a7886 95%,#8894a0 100%)"></div>
<div class="a" style="left:9px;top:734px;width:36px;height:36px;border-radius:50%;background:radial-gradient(circle at 50% 35%,#dfe9f2 0,#a9bccd 35%,#6d8aa5 70%);box-shadow:0 0 0 1.5px #223"></div>
<div class="a" style="left:19px;top:740px;width:8px;height:7px;border-radius:40% 10% 0 0;background:radial-gradient(circle at 50% 70%,#ffb040,#e8501c)"></div>
<div class="a" style="left:29px;top:740px;width:9px;height:7px;border-radius:10% 40% 0 0;background:radial-gradient(circle at 50% 70%,#c8e070,#6aaa30)"></div>
<div class="a" style="left:473px;top:739px;width:41px;height:10px;border:1px solid #3a4756;border-radius:3px;background:linear-gradient(#c8d2dc,#9aa8b6)"></div>
<div class="a" style="left:518px;top:739px;width:43px;height:10px;border:1px solid #3a4756;border-radius:3px;background:linear-gradient(#c8d2dc,#9aa8b6)"></div>
<div class="a" style="left:565px;top:739px;width:42px;height:10px;border:1px solid #3a4756;border-radius:3px;background:linear-gradient(#c8d2dc,#9aa8b6)"></div>
<div class="a" style="left:484px;top:741px;width:20px;height:5px;background:#3050c0"></div>
<div class="a" style="left:576px;top:741px;width:8px;height:5px;background:#d02020"></div>
<div class="a" style="left:1351px;top:739px;width:15px;height:7px;background:linear-gradient(#b4bec8,#8c98a4);border-left:1px solid #5a6470"></div>
<div class="a" style="left:1274px;top:699px;width:91px;height:38px;border-radius:19px;background:linear-gradient(#fafafa,#e6e6e6 60%,#d8d8d8);box-shadow:0 0 0 1px #c8c8c8,1px 1px 2px rgba(0,0,0,0.35)"></div>
<div class="a" style="left:1276px;top:701px;width:34px;height:34px;border-radius:50%;background:#dfeed8"></div>
<div class="a" style="left:1277px;top:702px;width:32px;height:32px;border-radius:50%;background:linear-gradient(#3d8f2c 0%,#4aa236 48%,#3fbf2a 50%,#36b322 100%);box-shadow:inset 0 0 0 1.5px #2a6a1e"></div>
<div class="a" style="left:1289px;top:705px;width:9px;height:4px;border-radius:50%;background:rgba(255,255,255,0.6)"></div>
<div class="txt" style="left:1277px;top:711px;width:32px;text-align:center;font-size:11px;color:#e8ffe0">52%</div>
<svg style="left:1311px;top:705px" width="10" height="26"><path d="M5 0 L10 5 H7 V9 H3 V5 H0Z" fill="#e03030"/><path d="M5 25 L10 20 H7 V16 H3 V20 H0Z" fill="#60a050"/></svg>
<div class="txt" style="left:1320px;top:705px;width:36px;text-align:right;font-size:11px;color:#000">0K/s</div>
<div class="txt" style="left:1320px;top:719px;width:36px;text-align:right;font-size:11px;color:#000">0K/s</div>
</div></body></html>
